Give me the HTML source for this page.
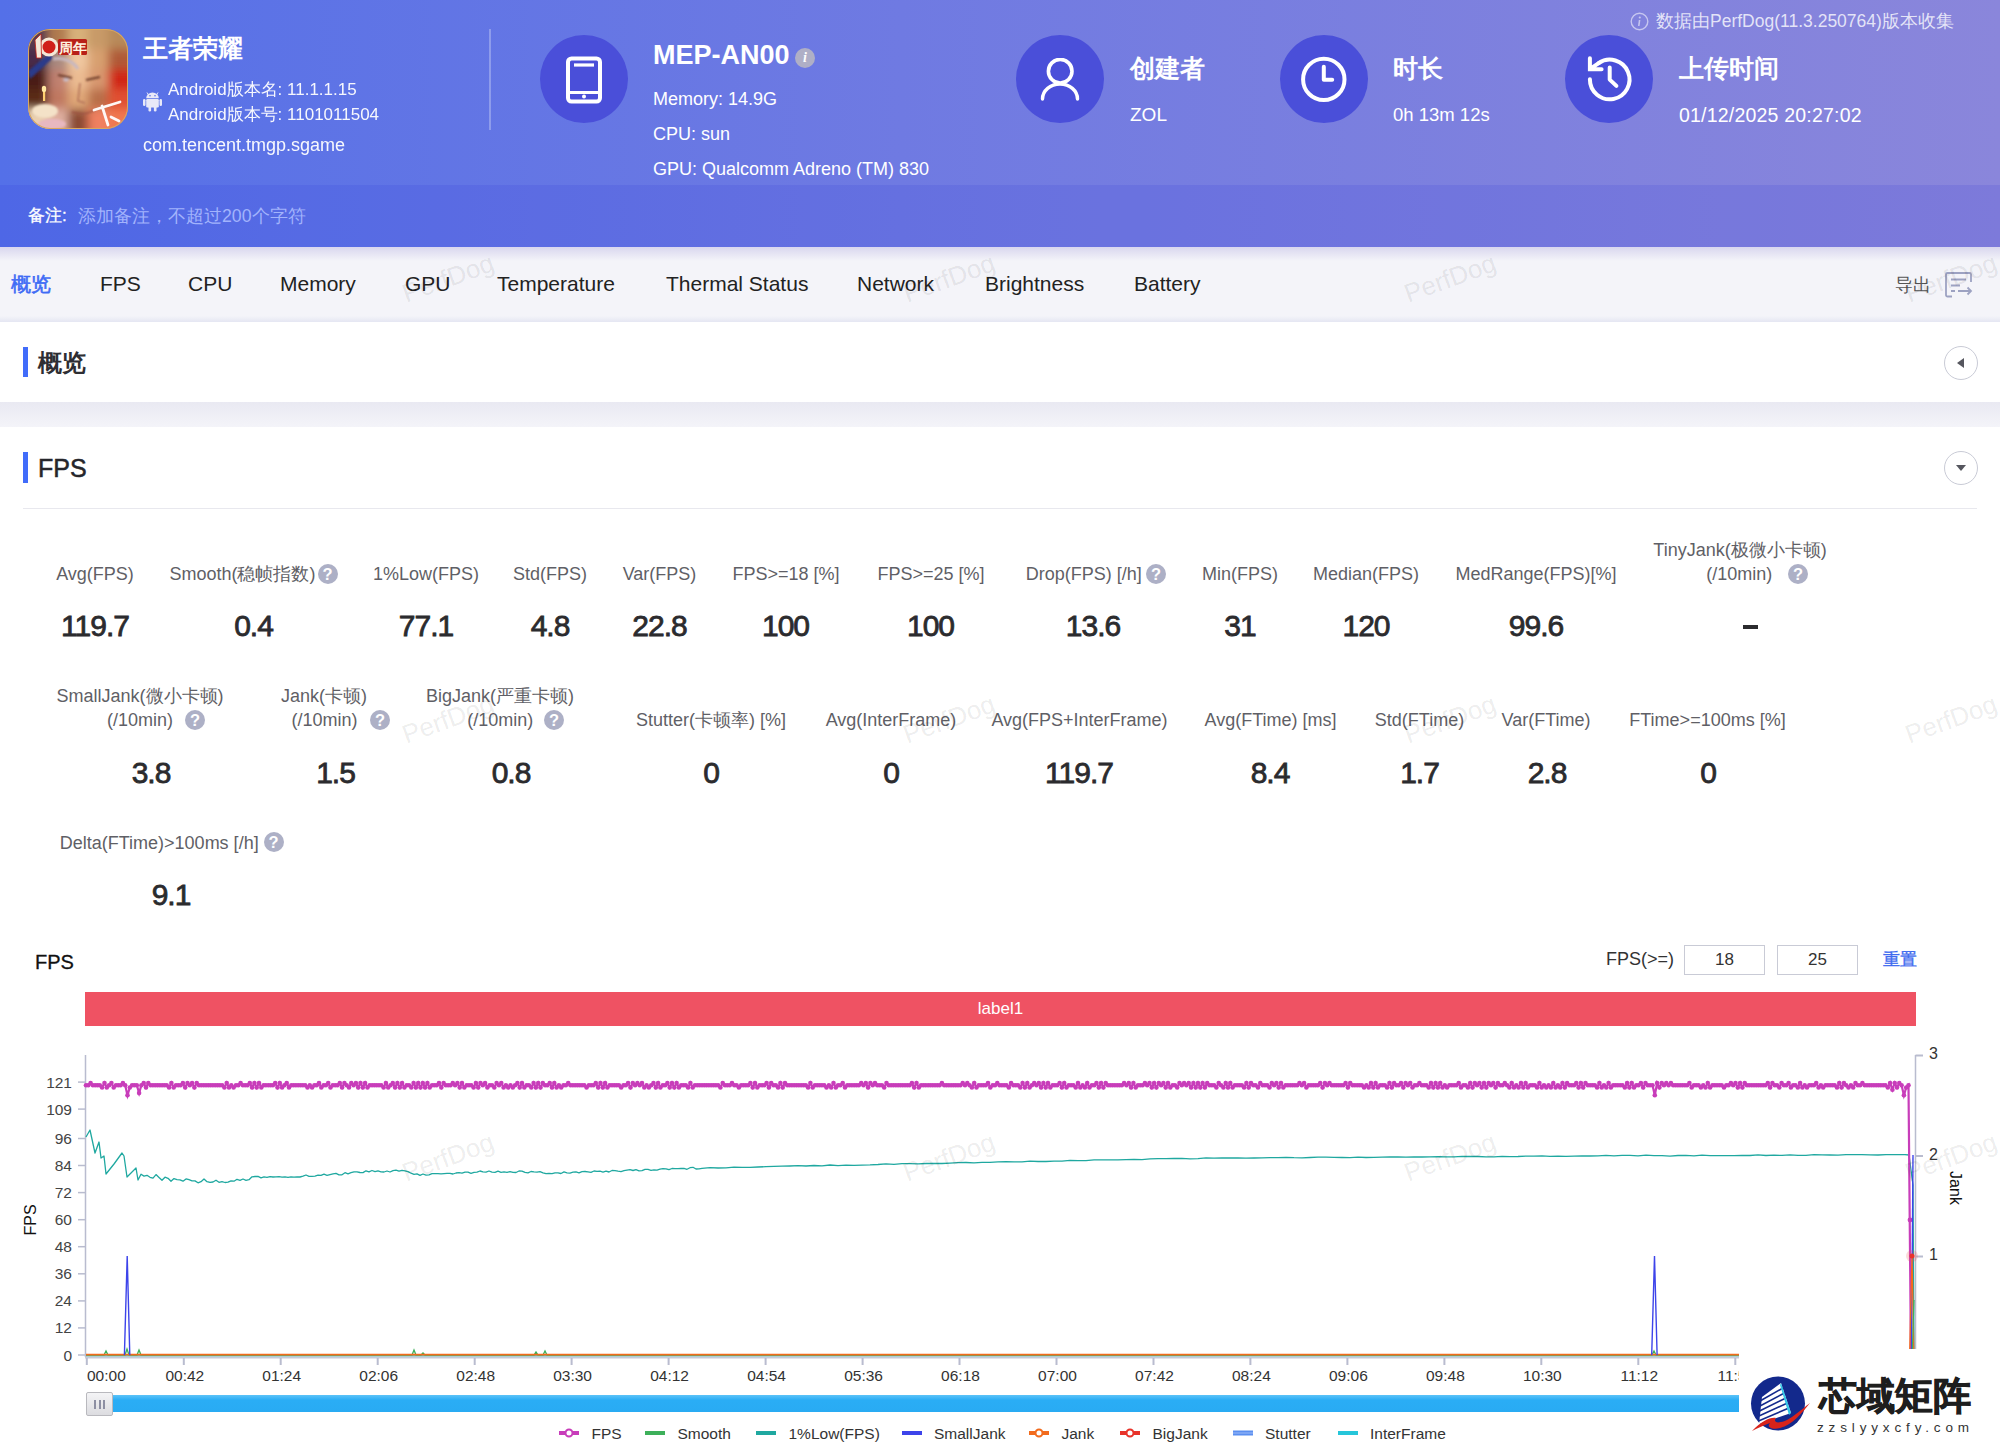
<!DOCTYPE html>
<html><head><meta charset="utf-8">
<style>
*{box-sizing:border-box;margin:0;padding:0}
html,body{width:2000px;height:1450px;overflow:hidden;background:#fff;font-family:"Liberation Sans",sans-serif;position:relative}
.a{position:absolute;white-space:nowrap}
#hdr{position:absolute;left:0;top:0;width:2000px;height:247px;background:linear-gradient(90deg,#5470E8 0%,#6F7AE2 45%,#8A86DB 100%)}
#note{position:absolute;left:0;top:185px;width:2000px;height:62px;background:rgba(40,50,215,0.13)}
.w{color:#fff}
.circ{position:absolute;width:88px;height:88px;border-radius:50%;background:#4A4FD9}
#tabs{position:absolute;left:0;top:247px;width:2000px;height:75px;background:#F4F4F9}
.tab{position:absolute;top:272px;font-size:21px;color:#222;line-height:24px}
.sec{position:absolute;left:0;width:2000px;background:#fff}
.bar{position:absolute;left:23px;width:5px;background:#416CFA}
.btn{position:absolute;width:34px;height:34px;border-radius:50%;border:1px solid #C9CBD6;background:#fff}
.lbl{position:absolute;font-size:18px;color:#5F5F66;text-align:center;width:400px;line-height:20px}
.val{position:absolute;font-size:30px;font-weight:400;color:#2B2B2E;text-align:center;width:400px;line-height:30px;letter-spacing:-1px;-webkit-text-stroke:0.8px #2B2B2E}
.q{display:inline-block;width:20px;height:20px;border-radius:50%;background:#ADB0C6;color:#fff;font-size:16.5px;font-weight:700;line-height:21px;text-align:center;vertical-align:-3px}
.wm{position:absolute;font-size:26px;color:rgba(0,0,0,0.085);transform:rotate(-20deg);transform-origin:center}
</style></head>
<body>
<div id="hdr"></div>
<div id="note"></div>

<!-- app icon -->
<svg class="a" style="left:28px;top:29px" width="100" height="100" viewBox="0 0 100 100">
 <defs><clipPath id="ic"><rect x="0" y="0" width="100" height="100" rx="22"/></clipPath><filter id="bl" x="-20%" y="-20%" width="140%" height="140%"><feGaussianBlur stdDeviation="5"/></filter><filter id="bl2"><feGaussianBlur stdDeviation="0.8"/></filter></defs>
 <g clip-path="url(#ic)">
  <g filter="url(#bl)"><rect x="-10" y="-10" width="30" height="30" fill="#5A3A50"/><rect x="20" y="-10" width="20" height="30" fill="#B07A50"/><rect x="40" y="-10" width="20" height="30" fill="#D8B07A"/><rect x="60" y="-10" width="20" height="30" fill="#C89A68"/><rect x="80" y="-10" width="30" height="30" fill="#B88A5A"/><rect x="-10" y="20" width="30" height="20" fill="#4A2A48"/><rect x="20" y="20" width="20" height="20" fill="#A88A80"/><rect x="40" y="20" width="20" height="20" fill="#F0C8A0"/><rect x="60" y="20" width="20" height="20" fill="#D8A070"/><rect x="80" y="20" width="30" height="20" fill="#B05A38"/><rect x="-10" y="40" width="30" height="20" fill="#4A1A18"/><rect x="20" y="40" width="20" height="20" fill="#C08070"/><rect x="40" y="40" width="20" height="20" fill="#EBBB92"/><rect x="60" y="40" width="20" height="20" fill="#D89870"/><rect x="80" y="40" width="30" height="20" fill="#D02818"/><rect x="-10" y="60" width="30" height="20" fill="#5A2A18"/><rect x="20" y="60" width="20" height="20" fill="#C07860"/><rect x="40" y="60" width="20" height="20" fill="#E0A878"/><rect x="60" y="60" width="20" height="20" fill="#B86E48"/><rect x="80" y="60" width="30" height="20" fill="#E05030"/><rect x="-10" y="80" width="30" height="30" fill="#EAD0B0"/><rect x="20" y="80" width="20" height="30" fill="#E0B0A0"/><rect x="40" y="80" width="20" height="30" fill="#8A4A30"/><rect x="60" y="80" width="20" height="30" fill="#F08060"/><rect x="80" y="80" width="30" height="30" fill="#F07850"/></g>
  <g filter="url(#bl2)">
   <path d="M0 42 L22 24 L25 29 L2 50 Z" fill="#2A3A8A"/>
   <path d="M25 30 C35 28 45 32 50 40" stroke="#C8B8C0" stroke-width="3" fill="none"/>
   <path d="M30 46 L44 49 M58 51 L72 48" stroke="#6A3A28" stroke-width="2"/>
   <ellipse cx="38" cy="51" rx="3" ry="1.4" fill="#C8C0D0"/>
   <path d="M52 54 L50 72 L57 74" stroke="#B07058" stroke-width="1.5" fill="none"/>
   <path d="M44 83 C52 86 60 85 66 81" stroke="#9A5040" stroke-width="1.5" fill="none"/>
  </g>
  <path d="M66 81 L92 73 M74 77 L80 96 M83 88 L91 92" stroke="#fff" stroke-width="2.8" stroke-linecap="round" opacity="0.95"/>
  <rect x="15" y="62" width="2.2" height="10" fill="#FFD070"/>
  <ellipse cx="16" cy="60" rx="2.2" ry="3.2" fill="#FFE8A0"/>
  <ellipse cx="17" cy="82" rx="13" ry="7" fill="#F4E2C8" filter="url(#bl2)"/>
  <ellipse cx="24" cy="95" rx="14" ry="5" fill="#E8B8C0" filter="url(#bl2)"/>
  <circle cx="21" cy="18" r="9.5" fill="#F4E8D8"/><circle cx="21" cy="18" r="6.5" fill="#D0201A"/>
  <path d="M7 11 L13 5 L13.5 29 L8.5 29 Z" fill="#F4E8D8" stroke="#C02018" stroke-width="0.8"/>
  <rect x="30" y="10" width="29" height="16" rx="1.5" fill="#B82018"/><text x="30.5" y="23.5" font-size="13.5" font-weight="700" fill="#FFF4E0" font-family="Liberation Sans,sans-serif">周年</text>
  <rect x="0" y="0" width="100" height="100" rx="22" fill="none" stroke="#D9A860" stroke-width="2"/>
 </g>
</svg>
<div class="a w" style="left:143px;top:33px;font-size:25px;font-weight:700;line-height:30px">王者荣耀</div>
<svg class="a" style="left:143px;top:90px" width="19" height="22" viewBox="0 0 19 22"><g fill="#E8E9F8"><path d="M4 2.5 L5.2 4.3 M15 2.5 L13.8 4.3" stroke="#E8E9F8" stroke-width="1"/><path d="M3.2 8.2 A6.3 5.6 0 0 1 15.8 8.2 Z"/><rect x="3.2" y="9" width="12.6" height="8.5" rx="1.2"/><rect x="0" y="9" width="2.5" height="7" rx="1.2"/><rect x="16.5" y="9" width="2.5" height="7" rx="1.2"/><rect x="5.5" y="16" width="2.6" height="5.5" rx="1.2"/><rect x="10.9" y="16" width="2.6" height="5.5" rx="1.2"/></g><circle cx="7" cy="5.8" r="0.8" fill="#5A6EE6"/><circle cx="12" cy="5.8" r="0.8" fill="#5A6EE6"/></svg>
<div class="a w" style="left:168px;top:80px;font-size:17px;line-height:20px;opacity:.95">Android版本名: 11.1.1.15</div>
<div class="a w" style="left:168px;top:105px;font-size:17px;line-height:20px;opacity:.95">Android版本号: 1101011504</div>
<div class="a w" style="left:143px;top:134px;font-size:18px;line-height:22px;opacity:.95">com.tencent.tmgp.sgame</div>
<div class="a" style="left:489px;top:29px;width:2px;height:101px;background:rgba(255,255,255,0.28)"></div>

<!-- device -->
<div class="circ" style="left:540px;top:35px"></div>
<svg class="a" style="left:565px;top:56px" width="38" height="48" viewBox="0 0 38 48"><rect x="3" y="2.5" width="32" height="43" rx="3.5" fill="none" stroke="#fff" stroke-width="4"/><line x1="9" y1="9" x2="29" y2="9" stroke="#fff" stroke-width="3.2"/><line x1="5" y1="36.5" x2="33" y2="36.5" stroke="#fff" stroke-width="3"/><circle cx="19" cy="40.5" r="2" fill="#fff"/></svg>
<div class="a w" style="left:653px;top:39px;font-size:27px;font-weight:700;line-height:32px">MEP-AN00</div>
<div class="a" style="left:795px;top:48px;width:20px;height:20px;border-radius:50%;background:#AFAFC6;color:#fff;font-size:14px;font-style:italic;font-weight:700;text-align:center;line-height:20px;font-family:'Liberation Serif',serif">i</div>
<div class="a w" style="left:653px;top:88px;font-size:18px;line-height:22px">Memory: 14.9G</div>
<div class="a w" style="left:653px;top:123px;font-size:18px;line-height:22px">CPU: sun</div>
<div class="a w" style="left:653px;top:158px;font-size:18px;line-height:22px">GPU: Qualcomm Adreno (TM) 830</div>

<!-- creator -->
<div class="circ" style="left:1016px;top:35px"></div>
<svg class="a" style="left:1040px;top:58px" width="40" height="44" viewBox="0 0 40 44"><circle cx="20.2" cy="13.2" r="11.8" fill="none" stroke="#fff" stroke-width="3.6"/><path d="M2.5 41 A17.5 15 0 0 1 37.5 41" fill="none" stroke="#fff" stroke-width="3.4" stroke-linecap="round"/></svg>
<div class="a w" style="left:1130px;top:53px;font-size:25px;font-weight:700;line-height:30px">创建者</div>
<div class="a w" style="left:1130px;top:104px;font-size:19px;line-height:22px">ZOL</div>

<!-- duration -->
<div class="circ" style="left:1280px;top:35px"></div>
<svg class="a" style="left:1299px;top:55px" width="50" height="50" viewBox="0 0 50 50"><circle cx="24.8" cy="24.4" r="20.7" fill="none" stroke="#fff" stroke-width="4"/><path d="M24.8 11.8 V24.8 H33.2" fill="none" stroke="#fff" stroke-width="4" stroke-linecap="round" stroke-linejoin="round"/></svg>
<div class="a w" style="left:1393px;top:53px;font-size:25px;font-weight:700;line-height:30px">时长</div>
<div class="a w" style="left:1393px;top:104px;font-size:18.5px;line-height:22px">0h 13m 12s</div>

<!-- upload -->
<div class="circ" style="left:1565px;top:35px"></div>
<svg class="a" style="left:1584px;top:55px" width="50" height="50" viewBox="0 0 50 50"><path d="M5.9 24.3 A19.8 19.8 0 1 0 14.6 8.1" fill="none" stroke="#fff" stroke-width="4" stroke-linecap="round"/><path d="M5.9 3.2 V14.2 H17.6 M6.5 13.6 L15.5 7.6" fill="none" stroke="#fff" stroke-width="4" stroke-linecap="round" stroke-linejoin="miter"/><path d="M25.7 12.4 V24.6 L32.4 30.9" fill="none" stroke="#fff" stroke-width="4" stroke-linecap="round" stroke-linejoin="round"/></svg>
<div class="a w" style="left:1679px;top:53px;font-size:25px;font-weight:700;line-height:30px">上传时间</div>
<div class="a w" style="left:1679px;top:104px;font-size:19.5px;letter-spacing:0.2px;line-height:22px">01/12/2025 20:27:02</div>

<!-- data source -->
<svg class="a" style="left:1630px;top:12px" width="19" height="19" viewBox="0 0 19 19"><circle cx="9.5" cy="9.5" r="8.3" fill="none" stroke="rgba(255,255,255,0.55)" stroke-width="1.4"/><circle cx="9.8" cy="5.5" r="1.1" fill="rgba(255,255,255,0.55)"/><path d="M9.6 8 L8.8 14" stroke="rgba(255,255,255,0.55)" stroke-width="1.6"/></svg>
<div class="a" style="left:1656px;top:10px;font-size:17.5px;line-height:22px;color:rgba(255,255,255,0.78)">数据由PerfDog(11.3.250764)版本收集</div>

<!-- note -->
<div class="a w" style="left:28px;top:205px;font-size:17px;line-height:22px;-webkit-text-stroke:0.3px #fff">备注:</div>
<div class="a" style="left:78px;top:205px;font-size:17.7px;line-height:22px;color:#A2B3FC">添加备注，不超过200个字符</div>

<!-- tabs -->
<div id="tabs"></div>
<div class="a" style="left:0;top:247px;width:2000px;height:14px;background:linear-gradient(180deg,rgba(120,110,200,0.22),rgba(120,110,200,0))"></div>
<div class="a" style="left:0;top:316px;width:2000px;height:6px;background:linear-gradient(180deg,rgba(200,205,230,0),rgba(200,205,230,0.35))"></div>
<div class="tab" style="left:11px;color:#3F6BF5;font-size:20px;-webkit-text-stroke:0.6px #3F6BF5">概览</div>
<div class="tab" style="left:100px">FPS</div>
<div class="tab" style="left:188px">CPU</div>
<div class="tab" style="left:280px">Memory</div>
<div class="tab" style="left:405px">GPU</div>
<div class="tab" style="left:497px">Temperature</div>
<div class="tab" style="left:666px">Thermal Status</div>
<div class="tab" style="left:857px">Network</div>
<div class="tab" style="left:985px">Brightness</div>
<div class="tab" style="left:1134px">Battery</div>
<div class="a" style="left:1895px;top:274px;font-size:18px;line-height:22px;color:#555">导出</div>
<svg class="a" style="left:1944px;top:271px" width="30" height="29" viewBox="0 0 30 29"><path d="M8 25.5 H3.5 A1.5 1.5 0 0 1 2 24 V3.5 A1.5 1.5 0 0 1 3.5 2 H25.5 A1.5 1.5 0 0 1 27 3.5 V11" fill="none" stroke="#9DA2C2" stroke-width="1.8"/><path d="M7 8.5 H22 M7 14.5 H16 M7 20 H11 M14 20 H27 M23.5 16.5 L27 20 L23.5 23.5" fill="none" stroke="#9DA2C2" stroke-width="1.8"/></svg>

<!-- overview section -->
<div class="sec" style="top:322px;height:80px"></div>
<div class="a" style="left:0;top:402px;width:2000px;height:25px;background:linear-gradient(180deg,#E9E9F2,#F4F4F9)"></div>
<div class="bar" style="top:347px;height:30px"></div>
<div class="a" style="left:38px;top:347px;font-size:24px;font-weight:700;color:#2E2E33;line-height:32px">概览</div>
<div class="btn" style="left:1944px;top:346px"><svg width="34" height="34" viewBox="0 0 34 34" style="position:absolute;left:-1px;top:-1px"><path d="M20 12 L13 17 L20 22 Z" fill="#55565E"/></svg></div>

<!-- fps section -->
<div class="sec" style="top:427px;height:1023px"></div>
<div class="bar" style="top:452px;height:31px"></div>
<div class="a" style="left:38px;top:453px;font-size:25px;color:#26262B;line-height:30px;-webkit-text-stroke:0.5px #26262B">FPS</div>
<div class="btn" style="left:1944px;top:451px"><svg width="34" height="34" viewBox="0 0 34 34" style="position:absolute;left:-1px;top:-1px"><path d="M12 14 L22 14 L17 20 Z" fill="#55565E"/></svg></div>
<div class="a" style="left:23px;top:508px;width:1954px;height:1px;background:#E8E8EE"></div>

<!-- metrics -->
<div class="lbl" style="left:-105.0px;top:564.0px">Avg(FPS)</div>
<div class="val" style="left:-105.0px;top:611.0px">119.7</div>
<div class="lbl" style="left:226.0px;top:564.0px">1%Low(FPS)</div>
<div class="val" style="left:226.0px;top:611.0px">77.1</div>
<div class="lbl" style="left:350.0px;top:564.0px">Std(FPS)</div>
<div class="val" style="left:350.0px;top:611.0px">4.8</div>
<div class="lbl" style="left:459.5px;top:564.0px">Var(FPS)</div>
<div class="val" style="left:459.5px;top:611.0px">22.8</div>
<div class="lbl" style="left:586.0px;top:564.0px">FPS&gt;=18 [%]</div>
<div class="val" style="left:585.5px;top:611.0px">100</div>
<div class="lbl" style="left:731.0px;top:564.0px">FPS&gt;=25 [%]</div>
<div class="val" style="left:730.5px;top:611.0px">100</div>
<div class="lbl" style="left:1040.0px;top:564.0px">Min(FPS)</div>
<div class="val" style="left:1040.0px;top:611.0px">31</div>
<div class="lbl" style="left:1166.0px;top:564.0px">Median(FPS)</div>
<div class="val" style="left:1166.0px;top:611.0px">120</div>
<div class="lbl" style="left:1336.0px;top:564.0px">MedRange(FPS)[%]</div>
<div class="val" style="left:1336.0px;top:611.0px">99.6</div>
<div class="lbl" style="left:42.4px;top:564.0px">Smooth(稳帧指数)</div>
<div class="a q" style="left:317.5px;top:563.5px;position:absolute">?</div>
<div class="val" style="left:53.5px;top:611.0px">0.4</div>
<div class="lbl" style="left:883.7px;top:564.0px">Drop(FPS) [/h]</div>
<div class="a q" style="left:1146.0px;top:563.5px;position:absolute">?</div>
<div class="val" style="left:893.0px;top:611.0px">13.6</div>
<div class="lbl" style="left:1540.0px;top:539.5px">TinyJank(极微小卡顿)</div>
<div class="lbl" style="left:1539.2px;top:564.0px">(/10min)</div>
<div class="a q" style="left:1788.0px;top:563.5px;position:absolute">?</div>
<div class="a" style="left:1743px;top:625px;width:15px;height:4px;background:#2B2B2E"></div>
<div class="lbl" style="left:-60.0px;top:685.5px">SmallJank(微小卡顿)</div>
<div class="lbl" style="left:-60.0px;top:710.0px">(/10min)</div>
<div class="a q" style="left:185.0px;top:709.5px;position:absolute">?</div>
<div class="lbl" style="left:124.0px;top:685.5px">Jank(卡顿)</div>
<div class="lbl" style="left:124.5px;top:710.0px">(/10min)</div>
<div class="a q" style="left:370.0px;top:709.5px;position:absolute">?</div>
<div class="lbl" style="left:300.0px;top:685.5px">BigJank(严重卡顿)</div>
<div class="lbl" style="left:300.2px;top:710.0px">(/10min)</div>
<div class="a q" style="left:544.0px;top:709.5px;position:absolute">?</div>
<div class="val" style="left:-49.0px;top:758.0px">3.8</div>
<div class="val" style="left:135.5px;top:758.0px">1.5</div>
<div class="val" style="left:311.0px;top:758.0px">0.8</div>
<div class="lbl" style="left:511.0px;top:710.0px">Stutter(卡顿率) [%]</div>
<div class="val" style="left:511.0px;top:758.0px">0</div>
<div class="lbl" style="left:691.0px;top:710.0px">Avg(InterFrame)</div>
<div class="val" style="left:691.0px;top:758.0px">0</div>
<div class="lbl" style="left:879.5px;top:710.0px">Avg(FPS+InterFrame)</div>
<div class="val" style="left:879.0px;top:758.0px">119.7</div>
<div class="lbl" style="left:1070.5px;top:710.0px">Avg(FTime) [ms]</div>
<div class="val" style="left:1070.0px;top:758.0px">8.4</div>
<div class="lbl" style="left:1219.5px;top:710.0px">Std(FTime)</div>
<div class="val" style="left:1219.5px;top:758.0px">1.7</div>
<div class="lbl" style="left:1346.0px;top:710.0px">Var(FTime)</div>
<div class="val" style="left:1347.0px;top:758.0px">2.8</div>
<div class="lbl" style="left:1507.5px;top:710.0px">FTime&gt;=100ms [%]</div>
<div class="val" style="left:1508.0px;top:758.0px">0</div>
<div class="lbl" style="left:-40.8px;top:832.5px">Delta(FTime)&gt;100ms [/h]</div>
<div class="a q" style="left:263.5px;top:832.0px;position:absolute">?</div>
<div class="val" style="left:-29.0px;top:880.0px">9.1</div>
<!-- chart -->
<div class="a" style="left:85px;top:992px;width:1831px;height:34px;background:#EF5263;color:#fff;font-size:17px;line-height:34px;text-align:center">label1</div>
<div class="a" style="left:35px;top:950px;font-size:20px;line-height:24px;color:#111;font-weight:400;-webkit-text-stroke:0.3px #111">FPS</div>
<div class="a" style="left:1606px;top:948px;font-size:18px;line-height:22px;color:#333">FPS(&gt;=)</div>
<div class="a" style="left:1684px;top:945px;width:81px;height:30px;border:1px solid #C9CBD6;font-size:17px;line-height:28px;text-align:center;color:#333">18</div>
<div class="a" style="left:1777px;top:945px;width:81px;height:30px;border:1px solid #C9CBD6;font-size:17px;line-height:28px;text-align:center;color:#333">25</div>
<div class="a" style="left:1883px;top:949px;font-size:17px;line-height:22px;color:#3F6BEF;-webkit-text-stroke:0.4px #3F6BEF">重置</div>
<svg class="a" style="left:0;top:1040px" width="2000" height="410" viewBox="0 1040 2000 410">
<line x1="85.5" y1="1055" x2="85.5" y2="1357" stroke="#B9BCCF" stroke-width="1.5"/>
<line x1="78" y1="1355.0" x2="85.5" y2="1355.0" stroke="#B9BCCF" stroke-width="1.5"/>
<text x="72" y="1360.5" text-anchor="end" font-size="15.5" fill="#444">0</text>
<line x1="78" y1="1327.9" x2="85.5" y2="1327.9" stroke="#B9BCCF" stroke-width="1.5"/>
<text x="72" y="1333.4" text-anchor="end" font-size="15.5" fill="#444">12</text>
<line x1="78" y1="1300.9" x2="85.5" y2="1300.9" stroke="#B9BCCF" stroke-width="1.5"/>
<text x="72" y="1306.4" text-anchor="end" font-size="15.5" fill="#444">24</text>
<line x1="78" y1="1273.8" x2="85.5" y2="1273.8" stroke="#B9BCCF" stroke-width="1.5"/>
<text x="72" y="1279.3" text-anchor="end" font-size="15.5" fill="#444">36</text>
<line x1="78" y1="1246.7" x2="85.5" y2="1246.7" stroke="#B9BCCF" stroke-width="1.5"/>
<text x="72" y="1252.2" text-anchor="end" font-size="15.5" fill="#444">48</text>
<line x1="78" y1="1219.7" x2="85.5" y2="1219.7" stroke="#B9BCCF" stroke-width="1.5"/>
<text x="72" y="1225.2" text-anchor="end" font-size="15.5" fill="#444">60</text>
<line x1="78" y1="1192.6" x2="85.5" y2="1192.6" stroke="#B9BCCF" stroke-width="1.5"/>
<text x="72" y="1198.1" text-anchor="end" font-size="15.5" fill="#444">72</text>
<line x1="78" y1="1165.5" x2="85.5" y2="1165.5" stroke="#B9BCCF" stroke-width="1.5"/>
<text x="72" y="1171.0" text-anchor="end" font-size="15.5" fill="#444">84</text>
<line x1="78" y1="1138.5" x2="85.5" y2="1138.5" stroke="#B9BCCF" stroke-width="1.5"/>
<text x="72" y="1144.0" text-anchor="end" font-size="15.5" fill="#444">96</text>
<line x1="78" y1="1109.1" x2="85.5" y2="1109.1" stroke="#B9BCCF" stroke-width="1.5"/>
<text x="72" y="1114.6" text-anchor="end" font-size="15.5" fill="#444">109</text>
<line x1="78" y1="1082.1" x2="85.5" y2="1082.1" stroke="#B9BCCF" stroke-width="1.5"/>
<text x="72" y="1087.6" text-anchor="end" font-size="15.5" fill="#444">121</text>
<text transform="translate(36,1220) rotate(-90)" text-anchor="middle" font-size="16" fill="#111">FPS</text>
<line x1="1915.5" y1="1055" x2="1915.5" y2="1357" stroke="#B9BCCF" stroke-width="1.5"/>
<line x1="1915.5" y1="1055.5" x2="1923" y2="1055.5" stroke="#B9BCCF" stroke-width="2"/>
<text x="1929" y="1059.0" font-size="16" fill="#333">3</text>
<line x1="1915.5" y1="1156.0" x2="1923" y2="1156.0" stroke="#B9BCCF" stroke-width="2"/>
<text x="1929" y="1159.5" font-size="16" fill="#333">2</text>
<line x1="1915.5" y1="1256.5" x2="1923" y2="1256.5" stroke="#B9BCCF" stroke-width="2"/>
<text x="1929" y="1260.0" font-size="16" fill="#333">1</text>
<text transform="translate(1950,1188) rotate(90)" text-anchor="middle" font-size="16" fill="#111">Jank</text>
<rect x="85" y="1356.5" width="1831" height="2" fill="#C8CAD8"/>
<rect x="85.8" y="1358" width="2" height="7" fill="#B9BCCF"/>
<text x="87" y="1381" font-size="15.5" fill="#333">00:00</text>
<rect x="182.8" y="1358" width="2" height="7" fill="#B9BCCF"/>
<text x="184.8" y="1381" text-anchor="middle" font-size="15.5" fill="#333">00:42</text>
<rect x="279.7" y="1358" width="2" height="7" fill="#B9BCCF"/>
<text x="281.7" y="1381" text-anchor="middle" font-size="15.5" fill="#333">01:24</text>
<rect x="376.7" y="1358" width="2" height="7" fill="#B9BCCF"/>
<text x="378.7" y="1381" text-anchor="middle" font-size="15.5" fill="#333">02:06</text>
<rect x="473.7" y="1358" width="2" height="7" fill="#B9BCCF"/>
<text x="475.7" y="1381" text-anchor="middle" font-size="15.5" fill="#333">02:48</text>
<rect x="570.6" y="1358" width="2" height="7" fill="#B9BCCF"/>
<text x="572.6" y="1381" text-anchor="middle" font-size="15.5" fill="#333">03:30</text>
<rect x="667.6" y="1358" width="2" height="7" fill="#B9BCCF"/>
<text x="669.6" y="1381" text-anchor="middle" font-size="15.5" fill="#333">04:12</text>
<rect x="764.6" y="1358" width="2" height="7" fill="#B9BCCF"/>
<text x="766.6" y="1381" text-anchor="middle" font-size="15.5" fill="#333">04:54</text>
<rect x="861.6" y="1358" width="2" height="7" fill="#B9BCCF"/>
<text x="863.6" y="1381" text-anchor="middle" font-size="15.5" fill="#333">05:36</text>
<rect x="958.5" y="1358" width="2" height="7" fill="#B9BCCF"/>
<text x="960.5" y="1381" text-anchor="middle" font-size="15.5" fill="#333">06:18</text>
<rect x="1055.5" y="1358" width="2" height="7" fill="#B9BCCF"/>
<text x="1057.5" y="1381" text-anchor="middle" font-size="15.5" fill="#333">07:00</text>
<rect x="1152.5" y="1358" width="2" height="7" fill="#B9BCCF"/>
<text x="1154.5" y="1381" text-anchor="middle" font-size="15.5" fill="#333">07:42</text>
<rect x="1249.4" y="1358" width="2" height="7" fill="#B9BCCF"/>
<text x="1251.4" y="1381" text-anchor="middle" font-size="15.5" fill="#333">08:24</text>
<rect x="1346.4" y="1358" width="2" height="7" fill="#B9BCCF"/>
<text x="1348.4" y="1381" text-anchor="middle" font-size="15.5" fill="#333">09:06</text>
<rect x="1443.4" y="1358" width="2" height="7" fill="#B9BCCF"/>
<text x="1445.4" y="1381" text-anchor="middle" font-size="15.5" fill="#333">09:48</text>
<rect x="1540.3" y="1358" width="2" height="7" fill="#B9BCCF"/>
<text x="1542.3" y="1381" text-anchor="middle" font-size="15.5" fill="#333">10:30</text>
<rect x="1637.3" y="1358" width="2" height="7" fill="#B9BCCF"/>
<text x="1639.3" y="1381" text-anchor="middle" font-size="15.5" fill="#333">11:12</text>
<rect x="1734.3" y="1358" width="2" height="7" fill="#B9BCCF"/>
<text x="1736.3" y="1381" text-anchor="middle" font-size="15.5" fill="#333">11:54</text>
<line x1="86" y1="1355.8" x2="1909" y2="1355.8" stroke="#1FA8A0" stroke-width="1"/>
<polyline points="86,1355 104.0,1355 106.0,1351 108.0,1355 125.0,1355 127.0,1349 129.0,1355 137.0,1355 139.0,1350 141.0,1355 412.0,1355 414.0,1350 416.0,1355 421.0,1355 423.0,1353 425.0,1355 534.0,1355 536.0,1352 538.0,1355 543.0,1355 545.0,1351 547.0,1355 1652.0,1355 1654.0,1351 1656.0,1355 1909,1355" fill="none" stroke="#3DB05A" stroke-width="1.3"/>
<line x1="86" y1="1354.6" x2="1909" y2="1354.6" stroke="#F26B1D" stroke-width="1.6"/>
<polyline points="124.4,1355 127.2,1256 129.8,1355" fill="none" stroke="#3D44EA" stroke-width="1.4"/>
<polyline points="1651.7,1355 1654.5,1256 1657.1,1355" fill="none" stroke="#3D44EA" stroke-width="1.4"/>
<polyline points="86,1137 90,1130 95,1153 99,1142 101,1158 104,1156 106,1174 114,1164 122,1153 124,1156 127,1177 136,1168 138,1180 141.0,1174.2 144.0,1176.1 147.0,1175.3 150.0,1177.3 153.0,1178.1 156.0,1174.6 159.0,1177.4 162.0,1180.3 165.0,1177.2 168.0,1178.3 171.0,1181.3 174.0,1178.6 177.0,1179.6 180.0,1179.9 183.0,1181.2 186.0,1178.9 189.0,1179.7 192.0,1180.9 195.0,1180.9 198.0,1182.8 201.0,1181.7 204.0,1178.9 207.0,1181.7 210.0,1182.4 213.0,1182.0 216.0,1180.2 219.0,1182.3 222.0,1181.6 225.0,1182.5 228.0,1182.2 231.0,1180.9 234.0,1181.2 237.0,1179.3 240.0,1180.3 243.0,1179.0 246.0,1180.3 249.0,1179.7 252.0,1176.8 255.0,1176.5 258.0,1176.4 261.0,1177.9 264.0,1176.9 267.0,1177.3 270.0,1176.6 273.0,1177.0 276.0,1176.8 279.0,1176.7 282.0,1177.1 285.0,1176.9 288.0,1177.4 291.0,1176.8 294.0,1177.2 297.0,1176.9 300.0,1177.0 303.0,1176.2 306.0,1175.0 309.0,1176.3 312.0,1176.3 315.0,1176.1 318.0,1175.2 321.0,1175.4 324.0,1174.2 327.0,1175.3 330.0,1174.6 333.0,1173.9 336.0,1173.3 339.0,1174.8 342.0,1174.8 345.0,1172.7 348.0,1173.8 351.0,1172.7 354.0,1171.9 357.0,1171.9 360.0,1172.5 363.0,1172.6 366.0,1170.8 369.0,1171.8 372.0,1170.5 375.0,1171.7 378.0,1170.8 381.0,1171.8 384.0,1172.0 387.0,1171.0 390.0,1172.0 393.0,1170.6 396.0,1170.2 399.0,1171.2 402.0,1170.3 405.0,1170.9 408.0,1171.6 411.0,1173.2 414.0,1174.3 417.0,1173.8 420.0,1175.3 423.0,1174.0 426.0,1175.2 429.0,1174.9 432.0,1173.7 435.0,1173.7 438.0,1173.7 441.0,1173.8 444.0,1173.6 447.0,1173.4 450.0,1173.4 453.0,1174.0 456.0,1173.0 459.0,1172.7 462.0,1173.2 465.0,1172.1 468.0,1172.1 471.0,1173.3 474.0,1172.3 477.0,1172.2 480.0,1171.0 483.0,1171.8 486.0,1172.2 489.0,1171.0 492.0,1172.2 495.0,1172.3 498.0,1171.1 501.0,1172.3 504.0,1171.9 507.0,1172.4 510.0,1171.7 513.0,1172.4 516.0,1172.5 519.0,1171.0 522.0,1171.1 525.0,1172.4 528.0,1172.9 531.0,1171.5 534.0,1171.9 537.0,1172.2 540.0,1171.6 543.0,1172.9 546.0,1173.6 549.0,1173.5 552.0,1173.7 555.0,1172.9 558.0,1172.9 561.0,1173.5 564.0,1171.9 567.0,1172.9 570.0,1173.1 573.0,1172.2 576.0,1171.9 579.0,1172.9 582.0,1171.7 585.0,1171.5 588.0,1171.9 591.0,1172.3 594.0,1171.0 597.0,1171.3 600.0,1171.2 603.0,1172.1 606.0,1171.2 609.0,1172.0 612.0,1170.5 615.0,1170.7 618.0,1171.2 621.0,1171.6 624.0,1170.6 627.0,1170.1 630.0,1169.7 633.0,1170.5 636.0,1169.7 639.0,1170.8 642.0,1170.7 645.0,1169.3 648.0,1169.4 651.0,1170.4 654.0,1169.9 657.0,1170.1 660.0,1169.1 663.0,1168.6 666.0,1168.8 669.0,1169.7 672.0,1168.5 675.0,1168.6 678.0,1168.6 681.0,1168.5 684.0,1168.4 687.0,1169.3 690.0,1167.7 693.0,1167.3 696.0,1169.0 699.0,1168.8 702.0,1168.3 710.0,1167.7 718.0,1168.0 726.0,1167.8 734.0,1167.1 742.0,1167.4 750.0,1167.3 758.0,1167.0 766.0,1166.7 774.0,1166.4 782.0,1166.2 790.0,1166.0 798.0,1165.7 806.0,1166.0 814.0,1165.5 822.0,1165.8 830.0,1165.0 838.0,1165.6 846.0,1165.2 854.0,1165.3 862.0,1165.1 870.0,1164.9 878.0,1164.5 886.0,1163.9 894.0,1164.3 902.0,1163.7 910.0,1163.6 918.0,1163.8 926.0,1163.5 934.0,1163.3 942.0,1163.5 950.0,1163.1 958.0,1162.7 966.0,1162.5 974.0,1162.8 982.0,1162.3 990.0,1162.4 998.0,1161.9 1006.0,1161.6 1014.0,1161.8 1022.0,1161.8 1030.0,1161.2 1038.0,1161.5 1046.0,1161.5 1054.0,1161.2 1062.0,1161.1 1070.0,1160.3 1078.0,1160.7 1086.0,1160.7 1094.0,1159.9 1102.0,1159.9 1110.0,1159.8 1118.0,1159.8 1126.0,1159.6 1134.0,1159.5 1142.0,1159.6 1150.0,1158.8 1158.0,1158.7 1166.0,1158.6 1174.0,1158.5 1182.0,1158.3 1190.0,1158.9 1198.0,1158.6 1206.0,1157.9 1214.0,1158.2 1222.0,1158.0 1230.0,1158.0 1238.0,1157.9 1246.0,1158.1 1254.0,1158.0 1262.0,1157.8 1270.0,1157.6 1278.0,1157.7 1286.0,1157.4 1294.0,1157.7 1302.0,1157.8 1310.0,1157.5 1318.0,1157.2 1326.0,1157.2 1334.0,1157.3 1342.0,1157.5 1350.0,1157.6 1358.0,1157.2 1366.0,1157.5 1374.0,1157.3 1382.0,1157.1 1390.0,1157.0 1398.0,1157.0 1406.0,1157.1 1414.0,1156.9 1422.0,1157.0 1430.0,1156.8 1438.0,1156.6 1446.0,1156.8 1454.0,1156.8 1462.0,1156.3 1470.0,1156.5 1478.0,1156.5 1486.0,1156.8 1494.0,1156.8 1502.0,1156.3 1510.0,1156.7 1518.0,1156.5 1526.0,1156.1 1534.0,1156.2 1542.0,1155.8 1550.0,1156.4 1558.0,1156.2 1566.0,1156.3 1574.0,1156.2 1582.0,1156.0 1590.0,1156.0 1598.0,1155.9 1606.0,1155.4 1614.0,1155.8 1622.0,1155.3 1630.0,1155.3 1638.0,1155.8 1646.0,1155.2 1654.0,1155.7 1662.0,1155.6 1670.0,1156.1 1678.0,1155.5 1686.0,1155.3 1694.0,1155.8 1702.0,1155.2 1710.0,1155.7 1718.0,1155.6 1726.0,1155.7 1734.0,1155.7 1742.0,1155.4 1750.0,1155.5 1758.0,1154.9 1766.0,1155.5 1774.0,1155.2 1782.0,1155.4 1790.0,1154.8 1798.0,1155.3 1806.0,1155.4 1814.0,1154.7 1822.0,1154.9 1830.0,1155.0 1838.0,1155.2 1846.0,1154.7 1854.0,1154.6 1862.0,1154.7 1870.0,1154.9 1878.0,1155.0 1886.0,1154.7 1894.0,1154.6 1902.0,1154.6 1905,1154.7 1909,1155 1913,1185 1914,1360" fill="none" stroke="#1FA8A0" stroke-width="1.3" stroke-linejoin="round"/>
<polyline points="86.0,1085.2 88.3,1085.2 90.6,1083.0 92.9,1085.2 95.2,1085.2 97.5,1085.2 99.8,1085.2 102.1,1087.5 104.5,1083.0 106.8,1087.5 109.1,1085.2 111.4,1083.0 113.7,1087.5 116.0,1085.2 118.3,1085.2 120.6,1085.2 122.9,1083.0 125.2,1085.2 127.5,1095.3 129.8,1087.5 132.1,1085.2 134.4,1085.2 136.8,1085.2 139.1,1093.1 141.4,1085.2 143.7,1083.0 146.0,1087.5 148.3,1083.0 150.6,1085.2 152.9,1085.2 155.2,1085.2 157.5,1085.2 159.8,1085.2 162.1,1085.2 164.4,1085.2 166.7,1085.2 169.1,1087.5 171.4,1083.0 173.7,1087.5 176.0,1085.2 178.3,1085.2 180.6,1085.2 182.9,1083.0 185.2,1087.5 187.5,1083.0 189.8,1085.2 192.1,1083.0 194.4,1087.5 196.7,1083.0 199.0,1085.2 201.3,1085.2 203.7,1085.2 206.0,1085.2 208.3,1085.2 210.6,1085.2 212.9,1085.2 215.2,1085.2 217.5,1085.2 219.8,1085.2 222.1,1085.2 224.4,1087.5 226.7,1083.0 229.0,1087.5 231.3,1085.2 233.6,1087.5 236.0,1085.2 238.3,1085.2 240.6,1083.0 242.9,1085.2 245.2,1085.2 247.5,1085.2 249.8,1083.0 252.1,1087.5 254.4,1083.0 256.7,1087.5 259.0,1083.0 261.3,1087.5 263.6,1085.2 265.9,1085.2 268.3,1085.2 270.6,1085.2 272.9,1085.2 275.2,1083.0 277.5,1087.5 279.8,1083.0 282.1,1087.5 284.4,1085.2 286.7,1083.0 289.0,1087.5 291.3,1085.2 293.6,1085.2 295.9,1085.2 298.2,1085.2 300.6,1085.2 302.9,1085.2 305.2,1085.2 307.5,1087.5 309.8,1085.2 312.1,1087.5 314.4,1085.2 316.7,1085.2 319.0,1083.0 321.3,1087.5 323.6,1085.2 325.9,1085.2 328.2,1083.0 330.5,1087.5 332.8,1085.2 335.2,1085.2 337.5,1085.2 339.8,1083.0 342.1,1087.5 344.4,1083.0 346.7,1085.2 349.0,1087.5 351.3,1083.0 353.6,1085.2 355.9,1083.0 358.2,1087.5 360.5,1083.0 362.8,1087.5 365.1,1083.0 367.5,1087.5 369.8,1085.2 372.1,1085.2 374.4,1085.2 376.7,1085.2 379.0,1085.2 381.3,1085.2 383.6,1087.5 385.9,1083.0 388.2,1087.5 390.5,1085.2 392.8,1083.0 395.1,1087.5 397.4,1083.0 399.8,1087.5 402.1,1083.0 404.4,1087.5 406.7,1085.2 409.0,1085.2 411.3,1087.5 413.6,1083.0 415.9,1087.5 418.2,1083.0 420.5,1087.5 422.8,1083.0 425.1,1087.5 427.4,1083.0 429.7,1087.5 432.1,1085.2 434.4,1085.2 436.7,1085.2 439.0,1083.0 441.3,1087.5 443.6,1083.0 445.9,1085.2 448.2,1085.2 450.5,1085.2 452.8,1083.0 455.1,1085.2 457.4,1083.0 459.7,1087.5 462.0,1083.0 464.3,1087.5 466.7,1085.2 469.0,1085.2 471.3,1085.2 473.6,1087.5 475.9,1083.0 478.2,1087.5 480.5,1083.0 482.8,1085.2 485.1,1083.0 487.4,1087.5 489.7,1085.2 492.0,1085.2 494.3,1087.5 496.6,1083.0 499.0,1085.2 501.3,1083.0 503.6,1087.5 505.9,1085.2 508.2,1087.5 510.5,1085.2 512.8,1087.5 515.1,1085.2 517.4,1083.0 519.7,1087.5 522.0,1083.0 524.3,1087.5 526.6,1085.2 528.9,1085.2 531.3,1087.5 533.6,1083.0 535.9,1087.5 538.2,1083.0 540.5,1087.5 542.8,1083.0 545.1,1085.2 547.4,1085.2 549.7,1083.0 552.0,1087.5 554.3,1083.0 556.6,1087.5 558.9,1085.2 561.2,1087.5 563.5,1085.2 565.9,1085.2 568.2,1083.0 570.5,1085.2 572.8,1085.2 575.1,1085.2 577.4,1085.2 579.7,1085.2 582.0,1085.2 584.3,1085.2 586.6,1087.5 588.9,1085.2 591.2,1085.2 593.5,1085.2 595.8,1083.0 598.2,1087.5 600.5,1083.0 602.8,1087.5 605.1,1083.0 607.4,1087.5 609.7,1085.2 612.0,1085.2 614.3,1085.2 616.6,1085.2 618.9,1085.2 621.2,1087.5 623.5,1085.2 625.8,1085.2 628.1,1083.0 630.5,1087.5 632.8,1083.0 635.1,1085.2 637.4,1083.0 639.7,1085.2 642.0,1083.0 644.3,1087.5 646.6,1085.2 648.9,1087.5 651.2,1085.2 653.5,1083.0 655.8,1087.5 658.1,1083.0 660.4,1087.5 662.8,1085.2 665.1,1085.2 667.4,1083.0 669.7,1087.5 672.0,1083.0 674.3,1087.5 676.6,1083.0 678.9,1087.5 681.2,1085.2 683.5,1085.2 685.8,1085.2 688.1,1087.5 690.4,1083.0 692.7,1087.5 695.0,1085.2 697.4,1085.2 699.7,1085.2 702.0,1085.2 704.3,1085.2 706.6,1085.2 708.9,1085.2 711.2,1085.2 713.5,1085.2 715.8,1085.2 718.1,1085.2 720.4,1087.5 722.7,1083.0 725.0,1085.2 727.3,1085.2 729.7,1085.2 732.0,1083.0 734.3,1085.2 736.6,1085.2 738.9,1087.5 741.2,1085.2 743.5,1085.2 745.8,1085.2 748.1,1085.2 750.4,1083.0 752.7,1087.5 755.0,1083.0 757.3,1087.5 759.6,1085.2 762.0,1085.2 764.3,1085.2 766.6,1083.0 768.9,1087.5 771.2,1083.0 773.5,1085.2 775.8,1085.2 778.1,1087.5 780.4,1083.0 782.7,1087.5 785.0,1083.0 787.3,1085.2 789.6,1085.2 791.9,1085.2 794.2,1085.2 796.6,1085.2 798.9,1085.2 801.2,1085.2 803.5,1085.2 805.8,1085.2 808.1,1087.5 810.4,1083.0 812.7,1087.5 815.0,1085.2 817.3,1085.2 819.6,1085.2 821.9,1085.2 824.2,1085.2 826.5,1087.5 828.9,1085.2 831.2,1087.5 833.5,1083.0 835.8,1087.5 838.1,1085.2 840.4,1085.2 842.7,1083.0 845.0,1087.5 847.3,1085.2 849.6,1085.2 851.9,1085.2 854.2,1085.2 856.5,1085.2 858.8,1085.2 861.2,1083.0 863.5,1085.2 865.8,1083.0 868.1,1087.5 870.4,1083.0 872.7,1085.2 875.0,1083.0 877.3,1085.2 879.6,1085.2 881.9,1085.2 884.2,1087.5 886.5,1083.0 888.8,1085.2 891.1,1085.2 893.4,1085.2 895.8,1085.2 898.1,1085.2 900.4,1085.2 902.7,1085.2 905.0,1085.2 907.3,1085.2 909.6,1085.2 911.9,1083.0 914.2,1087.5 916.5,1083.0 918.8,1087.5 921.1,1085.2 923.4,1085.2 925.7,1085.2 928.1,1085.2 930.4,1085.2 932.7,1085.2 935.0,1085.2 937.3,1085.2 939.6,1085.2 941.9,1083.0 944.2,1085.2 946.5,1085.2 948.8,1085.2 951.1,1085.2 953.4,1085.2 955.7,1085.2 958.0,1085.2 960.4,1085.2 962.7,1083.0 965.0,1085.2 967.3,1083.0 969.6,1085.2 971.9,1087.5 974.2,1083.0 976.5,1087.5 978.8,1085.2 981.1,1085.2 983.4,1085.2 985.7,1085.2 988.0,1083.0 990.3,1087.5 992.7,1085.2 995.0,1085.2 997.3,1083.0 999.6,1085.2 1001.9,1085.2 1004.2,1085.2 1006.5,1085.2 1008.8,1087.5 1011.1,1083.0 1013.4,1085.2 1015.7,1085.2 1018.0,1085.2 1020.3,1087.5 1022.6,1083.0 1024.9,1087.5 1027.3,1083.0 1029.6,1087.5 1031.9,1085.2 1034.2,1083.0 1036.5,1085.2 1038.8,1083.0 1041.1,1087.5 1043.4,1083.0 1045.7,1087.5 1048.0,1083.0 1050.3,1087.5 1052.6,1085.2 1054.9,1085.2 1057.2,1085.2 1059.6,1083.0 1061.9,1087.5 1064.2,1083.0 1066.5,1087.5 1068.8,1085.2 1071.1,1085.2 1073.4,1085.2 1075.7,1087.5 1078.0,1083.0 1080.3,1087.5 1082.6,1085.2 1084.9,1087.5 1087.2,1083.0 1089.5,1087.5 1091.9,1085.2 1094.2,1085.2 1096.5,1083.0 1098.8,1087.5 1101.1,1083.0 1103.4,1087.5 1105.7,1083.0 1108.0,1085.2 1110.3,1085.2 1112.6,1085.2 1114.9,1085.2 1117.2,1085.2 1119.5,1085.2 1121.8,1085.2 1124.1,1083.0 1126.5,1085.2 1128.8,1083.0 1131.1,1087.5 1133.4,1083.0 1135.7,1087.5 1138.0,1085.2 1140.3,1085.2 1142.6,1085.2 1144.9,1083.0 1147.2,1085.2 1149.5,1083.0 1151.8,1087.5 1154.1,1083.0 1156.4,1087.5 1158.8,1083.0 1161.1,1085.2 1163.4,1083.0 1165.7,1087.5 1168.0,1083.0 1170.3,1087.5 1172.6,1085.2 1174.9,1085.2 1177.2,1087.5 1179.5,1083.0 1181.8,1085.2 1184.1,1083.0 1186.4,1085.2 1188.7,1083.0 1191.1,1087.5 1193.4,1083.0 1195.7,1087.5 1198.0,1083.0 1200.3,1087.5 1202.6,1083.0 1204.9,1087.5 1207.2,1083.0 1209.5,1085.2 1211.8,1085.2 1214.1,1085.2 1216.4,1087.5 1218.7,1083.0 1221.0,1085.2 1223.4,1087.5 1225.7,1083.0 1228.0,1087.5 1230.3,1083.0 1232.6,1087.5 1234.9,1085.2 1237.2,1085.2 1239.5,1085.2 1241.8,1085.2 1244.1,1087.5 1246.4,1083.0 1248.7,1087.5 1251.0,1083.0 1253.3,1085.2 1255.6,1085.2 1258.0,1087.5 1260.3,1083.0 1262.6,1085.2 1264.9,1085.2 1267.2,1085.2 1269.5,1087.5 1271.8,1083.0 1274.1,1085.2 1276.4,1083.0 1278.7,1087.5 1281.0,1083.0 1283.3,1087.5 1285.6,1085.2 1287.9,1085.2 1290.3,1085.2 1292.6,1085.2 1294.9,1085.2 1297.2,1085.2 1299.5,1083.0 1301.8,1085.2 1304.1,1083.0 1306.4,1087.5 1308.7,1085.2 1311.0,1085.2 1313.3,1085.2 1315.6,1085.2 1317.9,1085.2 1320.2,1083.0 1322.6,1087.5 1324.9,1083.0 1327.2,1085.2 1329.5,1083.0 1331.8,1085.2 1334.1,1085.2 1336.4,1085.2 1338.7,1085.2 1341.0,1085.2 1343.3,1085.2 1345.6,1083.0 1347.9,1087.5 1350.2,1083.0 1352.5,1085.2 1354.8,1085.2 1357.2,1085.2 1359.5,1085.2 1361.8,1085.2 1364.1,1087.5 1366.4,1085.2 1368.7,1087.5 1371.0,1083.0 1373.3,1087.5 1375.6,1083.0 1377.9,1087.5 1380.2,1085.2 1382.5,1085.2 1384.8,1085.2 1387.1,1087.5 1389.5,1083.0 1391.8,1087.5 1394.1,1083.0 1396.4,1085.2 1398.7,1085.2 1401.0,1083.0 1403.3,1087.5 1405.6,1083.0 1407.9,1085.2 1410.2,1083.0 1412.5,1087.5 1414.8,1085.2 1417.1,1085.2 1419.4,1083.0 1421.8,1085.2 1424.1,1085.2 1426.4,1085.2 1428.7,1087.5 1431.0,1083.0 1433.3,1087.5 1435.6,1083.0 1437.9,1087.5 1440.2,1083.0 1442.5,1087.5 1444.8,1085.2 1447.1,1087.5 1449.4,1085.2 1451.7,1085.2 1454.1,1085.2 1456.4,1085.2 1458.7,1083.0 1461.0,1087.5 1463.3,1085.2 1465.6,1085.2 1467.9,1087.5 1470.2,1083.0 1472.5,1087.5 1474.8,1083.0 1477.1,1085.2 1479.4,1083.0 1481.7,1087.5 1484.0,1083.0 1486.3,1087.5 1488.7,1083.0 1491.0,1085.2 1493.3,1083.0 1495.6,1087.5 1497.9,1083.0 1500.2,1085.2 1502.5,1085.2 1504.8,1083.0 1507.1,1085.2 1509.4,1087.5 1511.7,1083.0 1514.0,1087.5 1516.3,1085.2 1518.6,1087.5 1521.0,1083.0 1523.3,1087.5 1525.6,1083.0 1527.9,1087.5 1530.2,1085.2 1532.5,1085.2 1534.8,1085.2 1537.1,1087.5 1539.4,1083.0 1541.7,1087.5 1544.0,1085.2 1546.3,1087.5 1548.6,1085.2 1550.9,1087.5 1553.3,1083.0 1555.6,1087.5 1557.9,1085.2 1560.2,1087.5 1562.5,1083.0 1564.8,1087.5 1567.1,1083.0 1569.4,1085.2 1571.7,1085.2 1574.0,1085.2 1576.3,1083.0 1578.6,1087.5 1580.9,1083.0 1583.2,1087.5 1585.5,1083.0 1587.9,1085.2 1590.2,1085.2 1592.5,1085.2 1594.8,1085.2 1597.1,1087.5 1599.4,1083.0 1601.7,1087.5 1604.0,1085.2 1606.3,1087.5 1608.6,1083.0 1610.9,1087.5 1613.2,1085.2 1615.5,1085.2 1617.8,1085.2 1620.2,1085.2 1622.5,1085.2 1624.8,1087.5 1627.1,1083.0 1629.4,1087.5 1631.7,1083.0 1634.0,1087.5 1636.3,1085.2 1638.6,1085.2 1640.9,1083.0 1643.2,1087.5 1645.5,1083.0 1647.8,1085.2 1650.1,1085.2 1652.5,1085.2 1654.8,1095.3 1657.1,1083.0 1659.4,1087.5 1661.7,1083.0 1664.0,1085.2 1666.3,1083.0 1668.6,1085.2 1670.9,1083.0 1673.2,1085.2 1675.5,1085.2 1677.8,1085.2 1680.1,1085.2 1682.4,1085.2 1684.8,1085.2 1687.1,1085.2 1689.4,1083.0 1691.7,1087.5 1694.0,1085.2 1696.3,1085.2 1698.6,1085.2 1700.9,1087.5 1703.2,1085.2 1705.5,1087.5 1707.8,1083.0 1710.1,1087.5 1712.4,1085.2 1714.7,1085.2 1717.0,1085.2 1719.4,1085.2 1721.7,1085.2 1724.0,1087.5 1726.3,1085.2 1728.6,1085.2 1730.9,1083.0 1733.2,1085.2 1735.5,1083.0 1737.8,1087.5 1740.1,1083.0 1742.4,1087.5 1744.7,1083.0 1747.0,1085.2 1749.3,1085.2 1751.7,1085.2 1754.0,1085.2 1756.3,1085.2 1758.6,1085.2 1760.9,1085.2 1763.2,1085.2 1765.5,1085.2 1767.8,1083.0 1770.1,1087.5 1772.4,1083.0 1774.7,1085.2 1777.0,1085.2 1779.3,1087.5 1781.6,1083.0 1784.0,1085.2 1786.3,1085.2 1788.6,1083.0 1790.9,1087.5 1793.2,1085.2 1795.5,1085.2 1797.8,1087.5 1800.1,1083.0 1802.4,1087.5 1804.7,1085.2 1807.0,1087.5 1809.3,1085.2 1811.6,1085.2 1813.9,1085.2 1816.2,1083.0 1818.6,1087.5 1820.9,1085.2 1823.2,1087.5 1825.5,1085.2 1827.8,1085.2 1830.1,1085.2 1832.4,1085.2 1834.7,1085.2 1837.0,1087.5 1839.3,1083.0 1841.6,1087.5 1843.9,1083.0 1846.2,1085.2 1848.5,1087.5 1850.9,1085.2 1853.2,1087.5 1855.5,1083.0 1857.8,1085.2 1860.1,1085.2 1862.4,1083.0 1864.7,1085.2 1867.0,1085.2 1869.3,1085.2 1871.6,1085.2 1873.9,1085.2 1876.2,1085.2 1878.5,1085.2 1880.8,1085.2 1883.2,1085.2 1885.5,1085.2 1887.8,1087.5 1890.1,1083.0 1892.4,1089.7 1894.7,1083.0 1897.0,1087.5 1899.3,1083.0 1901.6,1085.2 1903.9,1095.3 1906.2,1087.5 1908.5,1085.2 1911,1360" fill="none" stroke="#C83DBA" stroke-width="2.2"/>
<g fill="#C83DBA"><circle cx="86.0" cy="1085.2" r="2.3"/><circle cx="88.3" cy="1085.2" r="2.3"/><circle cx="90.6" cy="1083.0" r="2.3"/><circle cx="92.9" cy="1085.2" r="2.3"/><circle cx="95.2" cy="1085.2" r="2.3"/><circle cx="97.5" cy="1085.2" r="2.3"/><circle cx="99.8" cy="1085.2" r="2.3"/><circle cx="102.1" cy="1087.5" r="2.3"/><circle cx="104.5" cy="1083.0" r="2.3"/><circle cx="106.8" cy="1087.5" r="2.3"/><circle cx="109.1" cy="1085.2" r="2.3"/><circle cx="111.4" cy="1083.0" r="2.3"/><circle cx="113.7" cy="1087.5" r="2.3"/><circle cx="116.0" cy="1085.2" r="2.3"/><circle cx="118.3" cy="1085.2" r="2.3"/><circle cx="120.6" cy="1085.2" r="2.3"/><circle cx="122.9" cy="1083.0" r="2.3"/><circle cx="125.2" cy="1085.2" r="2.3"/><circle cx="127.5" cy="1095.3" r="2.3"/><circle cx="129.8" cy="1087.5" r="2.3"/><circle cx="132.1" cy="1085.2" r="2.3"/><circle cx="134.4" cy="1085.2" r="2.3"/><circle cx="136.8" cy="1085.2" r="2.3"/><circle cx="139.1" cy="1093.1" r="2.3"/><circle cx="141.4" cy="1085.2" r="2.3"/><circle cx="143.7" cy="1083.0" r="2.3"/><circle cx="146.0" cy="1087.5" r="2.3"/><circle cx="148.3" cy="1083.0" r="2.3"/><circle cx="150.6" cy="1085.2" r="2.3"/><circle cx="152.9" cy="1085.2" r="2.3"/><circle cx="155.2" cy="1085.2" r="2.3"/><circle cx="157.5" cy="1085.2" r="2.3"/><circle cx="159.8" cy="1085.2" r="2.3"/><circle cx="162.1" cy="1085.2" r="2.3"/><circle cx="164.4" cy="1085.2" r="2.3"/><circle cx="166.7" cy="1085.2" r="2.3"/><circle cx="169.1" cy="1087.5" r="2.3"/><circle cx="171.4" cy="1083.0" r="2.3"/><circle cx="173.7" cy="1087.5" r="2.3"/><circle cx="176.0" cy="1085.2" r="2.3"/><circle cx="178.3" cy="1085.2" r="2.3"/><circle cx="180.6" cy="1085.2" r="2.3"/><circle cx="182.9" cy="1083.0" r="2.3"/><circle cx="185.2" cy="1087.5" r="2.3"/><circle cx="187.5" cy="1083.0" r="2.3"/><circle cx="189.8" cy="1085.2" r="2.3"/><circle cx="192.1" cy="1083.0" r="2.3"/><circle cx="194.4" cy="1087.5" r="2.3"/><circle cx="196.7" cy="1083.0" r="2.3"/><circle cx="199.0" cy="1085.2" r="2.3"/><circle cx="201.3" cy="1085.2" r="2.3"/><circle cx="203.7" cy="1085.2" r="2.3"/><circle cx="206.0" cy="1085.2" r="2.3"/><circle cx="208.3" cy="1085.2" r="2.3"/><circle cx="210.6" cy="1085.2" r="2.3"/><circle cx="212.9" cy="1085.2" r="2.3"/><circle cx="215.2" cy="1085.2" r="2.3"/><circle cx="217.5" cy="1085.2" r="2.3"/><circle cx="219.8" cy="1085.2" r="2.3"/><circle cx="222.1" cy="1085.2" r="2.3"/><circle cx="224.4" cy="1087.5" r="2.3"/><circle cx="226.7" cy="1083.0" r="2.3"/><circle cx="229.0" cy="1087.5" r="2.3"/><circle cx="231.3" cy="1085.2" r="2.3"/><circle cx="233.6" cy="1087.5" r="2.3"/><circle cx="236.0" cy="1085.2" r="2.3"/><circle cx="238.3" cy="1085.2" r="2.3"/><circle cx="240.6" cy="1083.0" r="2.3"/><circle cx="242.9" cy="1085.2" r="2.3"/><circle cx="245.2" cy="1085.2" r="2.3"/><circle cx="247.5" cy="1085.2" r="2.3"/><circle cx="249.8" cy="1083.0" r="2.3"/><circle cx="252.1" cy="1087.5" r="2.3"/><circle cx="254.4" cy="1083.0" r="2.3"/><circle cx="256.7" cy="1087.5" r="2.3"/><circle cx="259.0" cy="1083.0" r="2.3"/><circle cx="261.3" cy="1087.5" r="2.3"/><circle cx="263.6" cy="1085.2" r="2.3"/><circle cx="265.9" cy="1085.2" r="2.3"/><circle cx="268.3" cy="1085.2" r="2.3"/><circle cx="270.6" cy="1085.2" r="2.3"/><circle cx="272.9" cy="1085.2" r="2.3"/><circle cx="275.2" cy="1083.0" r="2.3"/><circle cx="277.5" cy="1087.5" r="2.3"/><circle cx="279.8" cy="1083.0" r="2.3"/><circle cx="282.1" cy="1087.5" r="2.3"/><circle cx="284.4" cy="1085.2" r="2.3"/><circle cx="286.7" cy="1083.0" r="2.3"/><circle cx="289.0" cy="1087.5" r="2.3"/><circle cx="291.3" cy="1085.2" r="2.3"/><circle cx="293.6" cy="1085.2" r="2.3"/><circle cx="295.9" cy="1085.2" r="2.3"/><circle cx="298.2" cy="1085.2" r="2.3"/><circle cx="300.6" cy="1085.2" r="2.3"/><circle cx="302.9" cy="1085.2" r="2.3"/><circle cx="305.2" cy="1085.2" r="2.3"/><circle cx="307.5" cy="1087.5" r="2.3"/><circle cx="309.8" cy="1085.2" r="2.3"/><circle cx="312.1" cy="1087.5" r="2.3"/><circle cx="314.4" cy="1085.2" r="2.3"/><circle cx="316.7" cy="1085.2" r="2.3"/><circle cx="319.0" cy="1083.0" r="2.3"/><circle cx="321.3" cy="1087.5" r="2.3"/><circle cx="323.6" cy="1085.2" r="2.3"/><circle cx="325.9" cy="1085.2" r="2.3"/><circle cx="328.2" cy="1083.0" r="2.3"/><circle cx="330.5" cy="1087.5" r="2.3"/><circle cx="332.8" cy="1085.2" r="2.3"/><circle cx="335.2" cy="1085.2" r="2.3"/><circle cx="337.5" cy="1085.2" r="2.3"/><circle cx="339.8" cy="1083.0" r="2.3"/><circle cx="342.1" cy="1087.5" r="2.3"/><circle cx="344.4" cy="1083.0" r="2.3"/><circle cx="346.7" cy="1085.2" r="2.3"/><circle cx="349.0" cy="1087.5" r="2.3"/><circle cx="351.3" cy="1083.0" r="2.3"/><circle cx="353.6" cy="1085.2" r="2.3"/><circle cx="355.9" cy="1083.0" r="2.3"/><circle cx="358.2" cy="1087.5" r="2.3"/><circle cx="360.5" cy="1083.0" r="2.3"/><circle cx="362.8" cy="1087.5" r="2.3"/><circle cx="365.1" cy="1083.0" r="2.3"/><circle cx="367.5" cy="1087.5" r="2.3"/><circle cx="369.8" cy="1085.2" r="2.3"/><circle cx="372.1" cy="1085.2" r="2.3"/><circle cx="374.4" cy="1085.2" r="2.3"/><circle cx="376.7" cy="1085.2" r="2.3"/><circle cx="379.0" cy="1085.2" r="2.3"/><circle cx="381.3" cy="1085.2" r="2.3"/><circle cx="383.6" cy="1087.5" r="2.3"/><circle cx="385.9" cy="1083.0" r="2.3"/><circle cx="388.2" cy="1087.5" r="2.3"/><circle cx="390.5" cy="1085.2" r="2.3"/><circle cx="392.8" cy="1083.0" r="2.3"/><circle cx="395.1" cy="1087.5" r="2.3"/><circle cx="397.4" cy="1083.0" r="2.3"/><circle cx="399.8" cy="1087.5" r="2.3"/><circle cx="402.1" cy="1083.0" r="2.3"/><circle cx="404.4" cy="1087.5" r="2.3"/><circle cx="406.7" cy="1085.2" r="2.3"/><circle cx="409.0" cy="1085.2" r="2.3"/><circle cx="411.3" cy="1087.5" r="2.3"/><circle cx="413.6" cy="1083.0" r="2.3"/><circle cx="415.9" cy="1087.5" r="2.3"/><circle cx="418.2" cy="1083.0" r="2.3"/><circle cx="420.5" cy="1087.5" r="2.3"/><circle cx="422.8" cy="1083.0" r="2.3"/><circle cx="425.1" cy="1087.5" r="2.3"/><circle cx="427.4" cy="1083.0" r="2.3"/><circle cx="429.7" cy="1087.5" r="2.3"/><circle cx="432.1" cy="1085.2" r="2.3"/><circle cx="434.4" cy="1085.2" r="2.3"/><circle cx="436.7" cy="1085.2" r="2.3"/><circle cx="439.0" cy="1083.0" r="2.3"/><circle cx="441.3" cy="1087.5" r="2.3"/><circle cx="443.6" cy="1083.0" r="2.3"/><circle cx="445.9" cy="1085.2" r="2.3"/><circle cx="448.2" cy="1085.2" r="2.3"/><circle cx="450.5" cy="1085.2" r="2.3"/><circle cx="452.8" cy="1083.0" r="2.3"/><circle cx="455.1" cy="1085.2" r="2.3"/><circle cx="457.4" cy="1083.0" r="2.3"/><circle cx="459.7" cy="1087.5" r="2.3"/><circle cx="462.0" cy="1083.0" r="2.3"/><circle cx="464.3" cy="1087.5" r="2.3"/><circle cx="466.7" cy="1085.2" r="2.3"/><circle cx="469.0" cy="1085.2" r="2.3"/><circle cx="471.3" cy="1085.2" r="2.3"/><circle cx="473.6" cy="1087.5" r="2.3"/><circle cx="475.9" cy="1083.0" r="2.3"/><circle cx="478.2" cy="1087.5" r="2.3"/><circle cx="480.5" cy="1083.0" r="2.3"/><circle cx="482.8" cy="1085.2" r="2.3"/><circle cx="485.1" cy="1083.0" r="2.3"/><circle cx="487.4" cy="1087.5" r="2.3"/><circle cx="489.7" cy="1085.2" r="2.3"/><circle cx="492.0" cy="1085.2" r="2.3"/><circle cx="494.3" cy="1087.5" r="2.3"/><circle cx="496.6" cy="1083.0" r="2.3"/><circle cx="499.0" cy="1085.2" r="2.3"/><circle cx="501.3" cy="1083.0" r="2.3"/><circle cx="503.6" cy="1087.5" r="2.3"/><circle cx="505.9" cy="1085.2" r="2.3"/><circle cx="508.2" cy="1087.5" r="2.3"/><circle cx="510.5" cy="1085.2" r="2.3"/><circle cx="512.8" cy="1087.5" r="2.3"/><circle cx="515.1" cy="1085.2" r="2.3"/><circle cx="517.4" cy="1083.0" r="2.3"/><circle cx="519.7" cy="1087.5" r="2.3"/><circle cx="522.0" cy="1083.0" r="2.3"/><circle cx="524.3" cy="1087.5" r="2.3"/><circle cx="526.6" cy="1085.2" r="2.3"/><circle cx="528.9" cy="1085.2" r="2.3"/><circle cx="531.3" cy="1087.5" r="2.3"/><circle cx="533.6" cy="1083.0" r="2.3"/><circle cx="535.9" cy="1087.5" r="2.3"/><circle cx="538.2" cy="1083.0" r="2.3"/><circle cx="540.5" cy="1087.5" r="2.3"/><circle cx="542.8" cy="1083.0" r="2.3"/><circle cx="545.1" cy="1085.2" r="2.3"/><circle cx="547.4" cy="1085.2" r="2.3"/><circle cx="549.7" cy="1083.0" r="2.3"/><circle cx="552.0" cy="1087.5" r="2.3"/><circle cx="554.3" cy="1083.0" r="2.3"/><circle cx="556.6" cy="1087.5" r="2.3"/><circle cx="558.9" cy="1085.2" r="2.3"/><circle cx="561.2" cy="1087.5" r="2.3"/><circle cx="563.5" cy="1085.2" r="2.3"/><circle cx="565.9" cy="1085.2" r="2.3"/><circle cx="568.2" cy="1083.0" r="2.3"/><circle cx="570.5" cy="1085.2" r="2.3"/><circle cx="572.8" cy="1085.2" r="2.3"/><circle cx="575.1" cy="1085.2" r="2.3"/><circle cx="577.4" cy="1085.2" r="2.3"/><circle cx="579.7" cy="1085.2" r="2.3"/><circle cx="582.0" cy="1085.2" r="2.3"/><circle cx="584.3" cy="1085.2" r="2.3"/><circle cx="586.6" cy="1087.5" r="2.3"/><circle cx="588.9" cy="1085.2" r="2.3"/><circle cx="591.2" cy="1085.2" r="2.3"/><circle cx="593.5" cy="1085.2" r="2.3"/><circle cx="595.8" cy="1083.0" r="2.3"/><circle cx="598.2" cy="1087.5" r="2.3"/><circle cx="600.5" cy="1083.0" r="2.3"/><circle cx="602.8" cy="1087.5" r="2.3"/><circle cx="605.1" cy="1083.0" r="2.3"/><circle cx="607.4" cy="1087.5" r="2.3"/><circle cx="609.7" cy="1085.2" r="2.3"/><circle cx="612.0" cy="1085.2" r="2.3"/><circle cx="614.3" cy="1085.2" r="2.3"/><circle cx="616.6" cy="1085.2" r="2.3"/><circle cx="618.9" cy="1085.2" r="2.3"/><circle cx="621.2" cy="1087.5" r="2.3"/><circle cx="623.5" cy="1085.2" r="2.3"/><circle cx="625.8" cy="1085.2" r="2.3"/><circle cx="628.1" cy="1083.0" r="2.3"/><circle cx="630.5" cy="1087.5" r="2.3"/><circle cx="632.8" cy="1083.0" r="2.3"/><circle cx="635.1" cy="1085.2" r="2.3"/><circle cx="637.4" cy="1083.0" r="2.3"/><circle cx="639.7" cy="1085.2" r="2.3"/><circle cx="642.0" cy="1083.0" r="2.3"/><circle cx="644.3" cy="1087.5" r="2.3"/><circle cx="646.6" cy="1085.2" r="2.3"/><circle cx="648.9" cy="1087.5" r="2.3"/><circle cx="651.2" cy="1085.2" r="2.3"/><circle cx="653.5" cy="1083.0" r="2.3"/><circle cx="655.8" cy="1087.5" r="2.3"/><circle cx="658.1" cy="1083.0" r="2.3"/><circle cx="660.4" cy="1087.5" r="2.3"/><circle cx="662.8" cy="1085.2" r="2.3"/><circle cx="665.1" cy="1085.2" r="2.3"/><circle cx="667.4" cy="1083.0" r="2.3"/><circle cx="669.7" cy="1087.5" r="2.3"/><circle cx="672.0" cy="1083.0" r="2.3"/><circle cx="674.3" cy="1087.5" r="2.3"/><circle cx="676.6" cy="1083.0" r="2.3"/><circle cx="678.9" cy="1087.5" r="2.3"/><circle cx="681.2" cy="1085.2" r="2.3"/><circle cx="683.5" cy="1085.2" r="2.3"/><circle cx="685.8" cy="1085.2" r="2.3"/><circle cx="688.1" cy="1087.5" r="2.3"/><circle cx="690.4" cy="1083.0" r="2.3"/><circle cx="692.7" cy="1087.5" r="2.3"/><circle cx="695.0" cy="1085.2" r="2.3"/><circle cx="697.4" cy="1085.2" r="2.3"/><circle cx="699.7" cy="1085.2" r="2.3"/><circle cx="702.0" cy="1085.2" r="2.3"/><circle cx="704.3" cy="1085.2" r="2.3"/><circle cx="706.6" cy="1085.2" r="2.3"/><circle cx="708.9" cy="1085.2" r="2.3"/><circle cx="711.2" cy="1085.2" r="2.3"/><circle cx="713.5" cy="1085.2" r="2.3"/><circle cx="715.8" cy="1085.2" r="2.3"/><circle cx="718.1" cy="1085.2" r="2.3"/><circle cx="720.4" cy="1087.5" r="2.3"/><circle cx="722.7" cy="1083.0" r="2.3"/><circle cx="725.0" cy="1085.2" r="2.3"/><circle cx="727.3" cy="1085.2" r="2.3"/><circle cx="729.7" cy="1085.2" r="2.3"/><circle cx="732.0" cy="1083.0" r="2.3"/><circle cx="734.3" cy="1085.2" r="2.3"/><circle cx="736.6" cy="1085.2" r="2.3"/><circle cx="738.9" cy="1087.5" r="2.3"/><circle cx="741.2" cy="1085.2" r="2.3"/><circle cx="743.5" cy="1085.2" r="2.3"/><circle cx="745.8" cy="1085.2" r="2.3"/><circle cx="748.1" cy="1085.2" r="2.3"/><circle cx="750.4" cy="1083.0" r="2.3"/><circle cx="752.7" cy="1087.5" r="2.3"/><circle cx="755.0" cy="1083.0" r="2.3"/><circle cx="757.3" cy="1087.5" r="2.3"/><circle cx="759.6" cy="1085.2" r="2.3"/><circle cx="762.0" cy="1085.2" r="2.3"/><circle cx="764.3" cy="1085.2" r="2.3"/><circle cx="766.6" cy="1083.0" r="2.3"/><circle cx="768.9" cy="1087.5" r="2.3"/><circle cx="771.2" cy="1083.0" r="2.3"/><circle cx="773.5" cy="1085.2" r="2.3"/><circle cx="775.8" cy="1085.2" r="2.3"/><circle cx="778.1" cy="1087.5" r="2.3"/><circle cx="780.4" cy="1083.0" r="2.3"/><circle cx="782.7" cy="1087.5" r="2.3"/><circle cx="785.0" cy="1083.0" r="2.3"/><circle cx="787.3" cy="1085.2" r="2.3"/><circle cx="789.6" cy="1085.2" r="2.3"/><circle cx="791.9" cy="1085.2" r="2.3"/><circle cx="794.2" cy="1085.2" r="2.3"/><circle cx="796.6" cy="1085.2" r="2.3"/><circle cx="798.9" cy="1085.2" r="2.3"/><circle cx="801.2" cy="1085.2" r="2.3"/><circle cx="803.5" cy="1085.2" r="2.3"/><circle cx="805.8" cy="1085.2" r="2.3"/><circle cx="808.1" cy="1087.5" r="2.3"/><circle cx="810.4" cy="1083.0" r="2.3"/><circle cx="812.7" cy="1087.5" r="2.3"/><circle cx="815.0" cy="1085.2" r="2.3"/><circle cx="817.3" cy="1085.2" r="2.3"/><circle cx="819.6" cy="1085.2" r="2.3"/><circle cx="821.9" cy="1085.2" r="2.3"/><circle cx="824.2" cy="1085.2" r="2.3"/><circle cx="826.5" cy="1087.5" r="2.3"/><circle cx="828.9" cy="1085.2" r="2.3"/><circle cx="831.2" cy="1087.5" r="2.3"/><circle cx="833.5" cy="1083.0" r="2.3"/><circle cx="835.8" cy="1087.5" r="2.3"/><circle cx="838.1" cy="1085.2" r="2.3"/><circle cx="840.4" cy="1085.2" r="2.3"/><circle cx="842.7" cy="1083.0" r="2.3"/><circle cx="845.0" cy="1087.5" r="2.3"/><circle cx="847.3" cy="1085.2" r="2.3"/><circle cx="849.6" cy="1085.2" r="2.3"/><circle cx="851.9" cy="1085.2" r="2.3"/><circle cx="854.2" cy="1085.2" r="2.3"/><circle cx="856.5" cy="1085.2" r="2.3"/><circle cx="858.8" cy="1085.2" r="2.3"/><circle cx="861.2" cy="1083.0" r="2.3"/><circle cx="863.5" cy="1085.2" r="2.3"/><circle cx="865.8" cy="1083.0" r="2.3"/><circle cx="868.1" cy="1087.5" r="2.3"/><circle cx="870.4" cy="1083.0" r="2.3"/><circle cx="872.7" cy="1085.2" r="2.3"/><circle cx="875.0" cy="1083.0" r="2.3"/><circle cx="877.3" cy="1085.2" r="2.3"/><circle cx="879.6" cy="1085.2" r="2.3"/><circle cx="881.9" cy="1085.2" r="2.3"/><circle cx="884.2" cy="1087.5" r="2.3"/><circle cx="886.5" cy="1083.0" r="2.3"/><circle cx="888.8" cy="1085.2" r="2.3"/><circle cx="891.1" cy="1085.2" r="2.3"/><circle cx="893.4" cy="1085.2" r="2.3"/><circle cx="895.8" cy="1085.2" r="2.3"/><circle cx="898.1" cy="1085.2" r="2.3"/><circle cx="900.4" cy="1085.2" r="2.3"/><circle cx="902.7" cy="1085.2" r="2.3"/><circle cx="905.0" cy="1085.2" r="2.3"/><circle cx="907.3" cy="1085.2" r="2.3"/><circle cx="909.6" cy="1085.2" r="2.3"/><circle cx="911.9" cy="1083.0" r="2.3"/><circle cx="914.2" cy="1087.5" r="2.3"/><circle cx="916.5" cy="1083.0" r="2.3"/><circle cx="918.8" cy="1087.5" r="2.3"/><circle cx="921.1" cy="1085.2" r="2.3"/><circle cx="923.4" cy="1085.2" r="2.3"/><circle cx="925.7" cy="1085.2" r="2.3"/><circle cx="928.1" cy="1085.2" r="2.3"/><circle cx="930.4" cy="1085.2" r="2.3"/><circle cx="932.7" cy="1085.2" r="2.3"/><circle cx="935.0" cy="1085.2" r="2.3"/><circle cx="937.3" cy="1085.2" r="2.3"/><circle cx="939.6" cy="1085.2" r="2.3"/><circle cx="941.9" cy="1083.0" r="2.3"/><circle cx="944.2" cy="1085.2" r="2.3"/><circle cx="946.5" cy="1085.2" r="2.3"/><circle cx="948.8" cy="1085.2" r="2.3"/><circle cx="951.1" cy="1085.2" r="2.3"/><circle cx="953.4" cy="1085.2" r="2.3"/><circle cx="955.7" cy="1085.2" r="2.3"/><circle cx="958.0" cy="1085.2" r="2.3"/><circle cx="960.4" cy="1085.2" r="2.3"/><circle cx="962.7" cy="1083.0" r="2.3"/><circle cx="965.0" cy="1085.2" r="2.3"/><circle cx="967.3" cy="1083.0" r="2.3"/><circle cx="969.6" cy="1085.2" r="2.3"/><circle cx="971.9" cy="1087.5" r="2.3"/><circle cx="974.2" cy="1083.0" r="2.3"/><circle cx="976.5" cy="1087.5" r="2.3"/><circle cx="978.8" cy="1085.2" r="2.3"/><circle cx="981.1" cy="1085.2" r="2.3"/><circle cx="983.4" cy="1085.2" r="2.3"/><circle cx="985.7" cy="1085.2" r="2.3"/><circle cx="988.0" cy="1083.0" r="2.3"/><circle cx="990.3" cy="1087.5" r="2.3"/><circle cx="992.7" cy="1085.2" r="2.3"/><circle cx="995.0" cy="1085.2" r="2.3"/><circle cx="997.3" cy="1083.0" r="2.3"/><circle cx="999.6" cy="1085.2" r="2.3"/><circle cx="1001.9" cy="1085.2" r="2.3"/><circle cx="1004.2" cy="1085.2" r="2.3"/><circle cx="1006.5" cy="1085.2" r="2.3"/><circle cx="1008.8" cy="1087.5" r="2.3"/><circle cx="1011.1" cy="1083.0" r="2.3"/><circle cx="1013.4" cy="1085.2" r="2.3"/><circle cx="1015.7" cy="1085.2" r="2.3"/><circle cx="1018.0" cy="1085.2" r="2.3"/><circle cx="1020.3" cy="1087.5" r="2.3"/><circle cx="1022.6" cy="1083.0" r="2.3"/><circle cx="1024.9" cy="1087.5" r="2.3"/><circle cx="1027.3" cy="1083.0" r="2.3"/><circle cx="1029.6" cy="1087.5" r="2.3"/><circle cx="1031.9" cy="1085.2" r="2.3"/><circle cx="1034.2" cy="1083.0" r="2.3"/><circle cx="1036.5" cy="1085.2" r="2.3"/><circle cx="1038.8" cy="1083.0" r="2.3"/><circle cx="1041.1" cy="1087.5" r="2.3"/><circle cx="1043.4" cy="1083.0" r="2.3"/><circle cx="1045.7" cy="1087.5" r="2.3"/><circle cx="1048.0" cy="1083.0" r="2.3"/><circle cx="1050.3" cy="1087.5" r="2.3"/><circle cx="1052.6" cy="1085.2" r="2.3"/><circle cx="1054.9" cy="1085.2" r="2.3"/><circle cx="1057.2" cy="1085.2" r="2.3"/><circle cx="1059.6" cy="1083.0" r="2.3"/><circle cx="1061.9" cy="1087.5" r="2.3"/><circle cx="1064.2" cy="1083.0" r="2.3"/><circle cx="1066.5" cy="1087.5" r="2.3"/><circle cx="1068.8" cy="1085.2" r="2.3"/><circle cx="1071.1" cy="1085.2" r="2.3"/><circle cx="1073.4" cy="1085.2" r="2.3"/><circle cx="1075.7" cy="1087.5" r="2.3"/><circle cx="1078.0" cy="1083.0" r="2.3"/><circle cx="1080.3" cy="1087.5" r="2.3"/><circle cx="1082.6" cy="1085.2" r="2.3"/><circle cx="1084.9" cy="1087.5" r="2.3"/><circle cx="1087.2" cy="1083.0" r="2.3"/><circle cx="1089.5" cy="1087.5" r="2.3"/><circle cx="1091.9" cy="1085.2" r="2.3"/><circle cx="1094.2" cy="1085.2" r="2.3"/><circle cx="1096.5" cy="1083.0" r="2.3"/><circle cx="1098.8" cy="1087.5" r="2.3"/><circle cx="1101.1" cy="1083.0" r="2.3"/><circle cx="1103.4" cy="1087.5" r="2.3"/><circle cx="1105.7" cy="1083.0" r="2.3"/><circle cx="1108.0" cy="1085.2" r="2.3"/><circle cx="1110.3" cy="1085.2" r="2.3"/><circle cx="1112.6" cy="1085.2" r="2.3"/><circle cx="1114.9" cy="1085.2" r="2.3"/><circle cx="1117.2" cy="1085.2" r="2.3"/><circle cx="1119.5" cy="1085.2" r="2.3"/><circle cx="1121.8" cy="1085.2" r="2.3"/><circle cx="1124.1" cy="1083.0" r="2.3"/><circle cx="1126.5" cy="1085.2" r="2.3"/><circle cx="1128.8" cy="1083.0" r="2.3"/><circle cx="1131.1" cy="1087.5" r="2.3"/><circle cx="1133.4" cy="1083.0" r="2.3"/><circle cx="1135.7" cy="1087.5" r="2.3"/><circle cx="1138.0" cy="1085.2" r="2.3"/><circle cx="1140.3" cy="1085.2" r="2.3"/><circle cx="1142.6" cy="1085.2" r="2.3"/><circle cx="1144.9" cy="1083.0" r="2.3"/><circle cx="1147.2" cy="1085.2" r="2.3"/><circle cx="1149.5" cy="1083.0" r="2.3"/><circle cx="1151.8" cy="1087.5" r="2.3"/><circle cx="1154.1" cy="1083.0" r="2.3"/><circle cx="1156.4" cy="1087.5" r="2.3"/><circle cx="1158.8" cy="1083.0" r="2.3"/><circle cx="1161.1" cy="1085.2" r="2.3"/><circle cx="1163.4" cy="1083.0" r="2.3"/><circle cx="1165.7" cy="1087.5" r="2.3"/><circle cx="1168.0" cy="1083.0" r="2.3"/><circle cx="1170.3" cy="1087.5" r="2.3"/><circle cx="1172.6" cy="1085.2" r="2.3"/><circle cx="1174.9" cy="1085.2" r="2.3"/><circle cx="1177.2" cy="1087.5" r="2.3"/><circle cx="1179.5" cy="1083.0" r="2.3"/><circle cx="1181.8" cy="1085.2" r="2.3"/><circle cx="1184.1" cy="1083.0" r="2.3"/><circle cx="1186.4" cy="1085.2" r="2.3"/><circle cx="1188.7" cy="1083.0" r="2.3"/><circle cx="1191.1" cy="1087.5" r="2.3"/><circle cx="1193.4" cy="1083.0" r="2.3"/><circle cx="1195.7" cy="1087.5" r="2.3"/><circle cx="1198.0" cy="1083.0" r="2.3"/><circle cx="1200.3" cy="1087.5" r="2.3"/><circle cx="1202.6" cy="1083.0" r="2.3"/><circle cx="1204.9" cy="1087.5" r="2.3"/><circle cx="1207.2" cy="1083.0" r="2.3"/><circle cx="1209.5" cy="1085.2" r="2.3"/><circle cx="1211.8" cy="1085.2" r="2.3"/><circle cx="1214.1" cy="1085.2" r="2.3"/><circle cx="1216.4" cy="1087.5" r="2.3"/><circle cx="1218.7" cy="1083.0" r="2.3"/><circle cx="1221.0" cy="1085.2" r="2.3"/><circle cx="1223.4" cy="1087.5" r="2.3"/><circle cx="1225.7" cy="1083.0" r="2.3"/><circle cx="1228.0" cy="1087.5" r="2.3"/><circle cx="1230.3" cy="1083.0" r="2.3"/><circle cx="1232.6" cy="1087.5" r="2.3"/><circle cx="1234.9" cy="1085.2" r="2.3"/><circle cx="1237.2" cy="1085.2" r="2.3"/><circle cx="1239.5" cy="1085.2" r="2.3"/><circle cx="1241.8" cy="1085.2" r="2.3"/><circle cx="1244.1" cy="1087.5" r="2.3"/><circle cx="1246.4" cy="1083.0" r="2.3"/><circle cx="1248.7" cy="1087.5" r="2.3"/><circle cx="1251.0" cy="1083.0" r="2.3"/><circle cx="1253.3" cy="1085.2" r="2.3"/><circle cx="1255.6" cy="1085.2" r="2.3"/><circle cx="1258.0" cy="1087.5" r="2.3"/><circle cx="1260.3" cy="1083.0" r="2.3"/><circle cx="1262.6" cy="1085.2" r="2.3"/><circle cx="1264.9" cy="1085.2" r="2.3"/><circle cx="1267.2" cy="1085.2" r="2.3"/><circle cx="1269.5" cy="1087.5" r="2.3"/><circle cx="1271.8" cy="1083.0" r="2.3"/><circle cx="1274.1" cy="1085.2" r="2.3"/><circle cx="1276.4" cy="1083.0" r="2.3"/><circle cx="1278.7" cy="1087.5" r="2.3"/><circle cx="1281.0" cy="1083.0" r="2.3"/><circle cx="1283.3" cy="1087.5" r="2.3"/><circle cx="1285.6" cy="1085.2" r="2.3"/><circle cx="1287.9" cy="1085.2" r="2.3"/><circle cx="1290.3" cy="1085.2" r="2.3"/><circle cx="1292.6" cy="1085.2" r="2.3"/><circle cx="1294.9" cy="1085.2" r="2.3"/><circle cx="1297.2" cy="1085.2" r="2.3"/><circle cx="1299.5" cy="1083.0" r="2.3"/><circle cx="1301.8" cy="1085.2" r="2.3"/><circle cx="1304.1" cy="1083.0" r="2.3"/><circle cx="1306.4" cy="1087.5" r="2.3"/><circle cx="1308.7" cy="1085.2" r="2.3"/><circle cx="1311.0" cy="1085.2" r="2.3"/><circle cx="1313.3" cy="1085.2" r="2.3"/><circle cx="1315.6" cy="1085.2" r="2.3"/><circle cx="1317.9" cy="1085.2" r="2.3"/><circle cx="1320.2" cy="1083.0" r="2.3"/><circle cx="1322.6" cy="1087.5" r="2.3"/><circle cx="1324.9" cy="1083.0" r="2.3"/><circle cx="1327.2" cy="1085.2" r="2.3"/><circle cx="1329.5" cy="1083.0" r="2.3"/><circle cx="1331.8" cy="1085.2" r="2.3"/><circle cx="1334.1" cy="1085.2" r="2.3"/><circle cx="1336.4" cy="1085.2" r="2.3"/><circle cx="1338.7" cy="1085.2" r="2.3"/><circle cx="1341.0" cy="1085.2" r="2.3"/><circle cx="1343.3" cy="1085.2" r="2.3"/><circle cx="1345.6" cy="1083.0" r="2.3"/><circle cx="1347.9" cy="1087.5" r="2.3"/><circle cx="1350.2" cy="1083.0" r="2.3"/><circle cx="1352.5" cy="1085.2" r="2.3"/><circle cx="1354.8" cy="1085.2" r="2.3"/><circle cx="1357.2" cy="1085.2" r="2.3"/><circle cx="1359.5" cy="1085.2" r="2.3"/><circle cx="1361.8" cy="1085.2" r="2.3"/><circle cx="1364.1" cy="1087.5" r="2.3"/><circle cx="1366.4" cy="1085.2" r="2.3"/><circle cx="1368.7" cy="1087.5" r="2.3"/><circle cx="1371.0" cy="1083.0" r="2.3"/><circle cx="1373.3" cy="1087.5" r="2.3"/><circle cx="1375.6" cy="1083.0" r="2.3"/><circle cx="1377.9" cy="1087.5" r="2.3"/><circle cx="1380.2" cy="1085.2" r="2.3"/><circle cx="1382.5" cy="1085.2" r="2.3"/><circle cx="1384.8" cy="1085.2" r="2.3"/><circle cx="1387.1" cy="1087.5" r="2.3"/><circle cx="1389.5" cy="1083.0" r="2.3"/><circle cx="1391.8" cy="1087.5" r="2.3"/><circle cx="1394.1" cy="1083.0" r="2.3"/><circle cx="1396.4" cy="1085.2" r="2.3"/><circle cx="1398.7" cy="1085.2" r="2.3"/><circle cx="1401.0" cy="1083.0" r="2.3"/><circle cx="1403.3" cy="1087.5" r="2.3"/><circle cx="1405.6" cy="1083.0" r="2.3"/><circle cx="1407.9" cy="1085.2" r="2.3"/><circle cx="1410.2" cy="1083.0" r="2.3"/><circle cx="1412.5" cy="1087.5" r="2.3"/><circle cx="1414.8" cy="1085.2" r="2.3"/><circle cx="1417.1" cy="1085.2" r="2.3"/><circle cx="1419.4" cy="1083.0" r="2.3"/><circle cx="1421.8" cy="1085.2" r="2.3"/><circle cx="1424.1" cy="1085.2" r="2.3"/><circle cx="1426.4" cy="1085.2" r="2.3"/><circle cx="1428.7" cy="1087.5" r="2.3"/><circle cx="1431.0" cy="1083.0" r="2.3"/><circle cx="1433.3" cy="1087.5" r="2.3"/><circle cx="1435.6" cy="1083.0" r="2.3"/><circle cx="1437.9" cy="1087.5" r="2.3"/><circle cx="1440.2" cy="1083.0" r="2.3"/><circle cx="1442.5" cy="1087.5" r="2.3"/><circle cx="1444.8" cy="1085.2" r="2.3"/><circle cx="1447.1" cy="1087.5" r="2.3"/><circle cx="1449.4" cy="1085.2" r="2.3"/><circle cx="1451.7" cy="1085.2" r="2.3"/><circle cx="1454.1" cy="1085.2" r="2.3"/><circle cx="1456.4" cy="1085.2" r="2.3"/><circle cx="1458.7" cy="1083.0" r="2.3"/><circle cx="1461.0" cy="1087.5" r="2.3"/><circle cx="1463.3" cy="1085.2" r="2.3"/><circle cx="1465.6" cy="1085.2" r="2.3"/><circle cx="1467.9" cy="1087.5" r="2.3"/><circle cx="1470.2" cy="1083.0" r="2.3"/><circle cx="1472.5" cy="1087.5" r="2.3"/><circle cx="1474.8" cy="1083.0" r="2.3"/><circle cx="1477.1" cy="1085.2" r="2.3"/><circle cx="1479.4" cy="1083.0" r="2.3"/><circle cx="1481.7" cy="1087.5" r="2.3"/><circle cx="1484.0" cy="1083.0" r="2.3"/><circle cx="1486.3" cy="1087.5" r="2.3"/><circle cx="1488.7" cy="1083.0" r="2.3"/><circle cx="1491.0" cy="1085.2" r="2.3"/><circle cx="1493.3" cy="1083.0" r="2.3"/><circle cx="1495.6" cy="1087.5" r="2.3"/><circle cx="1497.9" cy="1083.0" r="2.3"/><circle cx="1500.2" cy="1085.2" r="2.3"/><circle cx="1502.5" cy="1085.2" r="2.3"/><circle cx="1504.8" cy="1083.0" r="2.3"/><circle cx="1507.1" cy="1085.2" r="2.3"/><circle cx="1509.4" cy="1087.5" r="2.3"/><circle cx="1511.7" cy="1083.0" r="2.3"/><circle cx="1514.0" cy="1087.5" r="2.3"/><circle cx="1516.3" cy="1085.2" r="2.3"/><circle cx="1518.6" cy="1087.5" r="2.3"/><circle cx="1521.0" cy="1083.0" r="2.3"/><circle cx="1523.3" cy="1087.5" r="2.3"/><circle cx="1525.6" cy="1083.0" r="2.3"/><circle cx="1527.9" cy="1087.5" r="2.3"/><circle cx="1530.2" cy="1085.2" r="2.3"/><circle cx="1532.5" cy="1085.2" r="2.3"/><circle cx="1534.8" cy="1085.2" r="2.3"/><circle cx="1537.1" cy="1087.5" r="2.3"/><circle cx="1539.4" cy="1083.0" r="2.3"/><circle cx="1541.7" cy="1087.5" r="2.3"/><circle cx="1544.0" cy="1085.2" r="2.3"/><circle cx="1546.3" cy="1087.5" r="2.3"/><circle cx="1548.6" cy="1085.2" r="2.3"/><circle cx="1550.9" cy="1087.5" r="2.3"/><circle cx="1553.3" cy="1083.0" r="2.3"/><circle cx="1555.6" cy="1087.5" r="2.3"/><circle cx="1557.9" cy="1085.2" r="2.3"/><circle cx="1560.2" cy="1087.5" r="2.3"/><circle cx="1562.5" cy="1083.0" r="2.3"/><circle cx="1564.8" cy="1087.5" r="2.3"/><circle cx="1567.1" cy="1083.0" r="2.3"/><circle cx="1569.4" cy="1085.2" r="2.3"/><circle cx="1571.7" cy="1085.2" r="2.3"/><circle cx="1574.0" cy="1085.2" r="2.3"/><circle cx="1576.3" cy="1083.0" r="2.3"/><circle cx="1578.6" cy="1087.5" r="2.3"/><circle cx="1580.9" cy="1083.0" r="2.3"/><circle cx="1583.2" cy="1087.5" r="2.3"/><circle cx="1585.5" cy="1083.0" r="2.3"/><circle cx="1587.9" cy="1085.2" r="2.3"/><circle cx="1590.2" cy="1085.2" r="2.3"/><circle cx="1592.5" cy="1085.2" r="2.3"/><circle cx="1594.8" cy="1085.2" r="2.3"/><circle cx="1597.1" cy="1087.5" r="2.3"/><circle cx="1599.4" cy="1083.0" r="2.3"/><circle cx="1601.7" cy="1087.5" r="2.3"/><circle cx="1604.0" cy="1085.2" r="2.3"/><circle cx="1606.3" cy="1087.5" r="2.3"/><circle cx="1608.6" cy="1083.0" r="2.3"/><circle cx="1610.9" cy="1087.5" r="2.3"/><circle cx="1613.2" cy="1085.2" r="2.3"/><circle cx="1615.5" cy="1085.2" r="2.3"/><circle cx="1617.8" cy="1085.2" r="2.3"/><circle cx="1620.2" cy="1085.2" r="2.3"/><circle cx="1622.5" cy="1085.2" r="2.3"/><circle cx="1624.8" cy="1087.5" r="2.3"/><circle cx="1627.1" cy="1083.0" r="2.3"/><circle cx="1629.4" cy="1087.5" r="2.3"/><circle cx="1631.7" cy="1083.0" r="2.3"/><circle cx="1634.0" cy="1087.5" r="2.3"/><circle cx="1636.3" cy="1085.2" r="2.3"/><circle cx="1638.6" cy="1085.2" r="2.3"/><circle cx="1640.9" cy="1083.0" r="2.3"/><circle cx="1643.2" cy="1087.5" r="2.3"/><circle cx="1645.5" cy="1083.0" r="2.3"/><circle cx="1647.8" cy="1085.2" r="2.3"/><circle cx="1650.1" cy="1085.2" r="2.3"/><circle cx="1652.5" cy="1085.2" r="2.3"/><circle cx="1654.8" cy="1095.3" r="2.3"/><circle cx="1657.1" cy="1083.0" r="2.3"/><circle cx="1659.4" cy="1087.5" r="2.3"/><circle cx="1661.7" cy="1083.0" r="2.3"/><circle cx="1664.0" cy="1085.2" r="2.3"/><circle cx="1666.3" cy="1083.0" r="2.3"/><circle cx="1668.6" cy="1085.2" r="2.3"/><circle cx="1670.9" cy="1083.0" r="2.3"/><circle cx="1673.2" cy="1085.2" r="2.3"/><circle cx="1675.5" cy="1085.2" r="2.3"/><circle cx="1677.8" cy="1085.2" r="2.3"/><circle cx="1680.1" cy="1085.2" r="2.3"/><circle cx="1682.4" cy="1085.2" r="2.3"/><circle cx="1684.8" cy="1085.2" r="2.3"/><circle cx="1687.1" cy="1085.2" r="2.3"/><circle cx="1689.4" cy="1083.0" r="2.3"/><circle cx="1691.7" cy="1087.5" r="2.3"/><circle cx="1694.0" cy="1085.2" r="2.3"/><circle cx="1696.3" cy="1085.2" r="2.3"/><circle cx="1698.6" cy="1085.2" r="2.3"/><circle cx="1700.9" cy="1087.5" r="2.3"/><circle cx="1703.2" cy="1085.2" r="2.3"/><circle cx="1705.5" cy="1087.5" r="2.3"/><circle cx="1707.8" cy="1083.0" r="2.3"/><circle cx="1710.1" cy="1087.5" r="2.3"/><circle cx="1712.4" cy="1085.2" r="2.3"/><circle cx="1714.7" cy="1085.2" r="2.3"/><circle cx="1717.0" cy="1085.2" r="2.3"/><circle cx="1719.4" cy="1085.2" r="2.3"/><circle cx="1721.7" cy="1085.2" r="2.3"/><circle cx="1724.0" cy="1087.5" r="2.3"/><circle cx="1726.3" cy="1085.2" r="2.3"/><circle cx="1728.6" cy="1085.2" r="2.3"/><circle cx="1730.9" cy="1083.0" r="2.3"/><circle cx="1733.2" cy="1085.2" r="2.3"/><circle cx="1735.5" cy="1083.0" r="2.3"/><circle cx="1737.8" cy="1087.5" r="2.3"/><circle cx="1740.1" cy="1083.0" r="2.3"/><circle cx="1742.4" cy="1087.5" r="2.3"/><circle cx="1744.7" cy="1083.0" r="2.3"/><circle cx="1747.0" cy="1085.2" r="2.3"/><circle cx="1749.3" cy="1085.2" r="2.3"/><circle cx="1751.7" cy="1085.2" r="2.3"/><circle cx="1754.0" cy="1085.2" r="2.3"/><circle cx="1756.3" cy="1085.2" r="2.3"/><circle cx="1758.6" cy="1085.2" r="2.3"/><circle cx="1760.9" cy="1085.2" r="2.3"/><circle cx="1763.2" cy="1085.2" r="2.3"/><circle cx="1765.5" cy="1085.2" r="2.3"/><circle cx="1767.8" cy="1083.0" r="2.3"/><circle cx="1770.1" cy="1087.5" r="2.3"/><circle cx="1772.4" cy="1083.0" r="2.3"/><circle cx="1774.7" cy="1085.2" r="2.3"/><circle cx="1777.0" cy="1085.2" r="2.3"/><circle cx="1779.3" cy="1087.5" r="2.3"/><circle cx="1781.6" cy="1083.0" r="2.3"/><circle cx="1784.0" cy="1085.2" r="2.3"/><circle cx="1786.3" cy="1085.2" r="2.3"/><circle cx="1788.6" cy="1083.0" r="2.3"/><circle cx="1790.9" cy="1087.5" r="2.3"/><circle cx="1793.2" cy="1085.2" r="2.3"/><circle cx="1795.5" cy="1085.2" r="2.3"/><circle cx="1797.8" cy="1087.5" r="2.3"/><circle cx="1800.1" cy="1083.0" r="2.3"/><circle cx="1802.4" cy="1087.5" r="2.3"/><circle cx="1804.7" cy="1085.2" r="2.3"/><circle cx="1807.0" cy="1087.5" r="2.3"/><circle cx="1809.3" cy="1085.2" r="2.3"/><circle cx="1811.6" cy="1085.2" r="2.3"/><circle cx="1813.9" cy="1085.2" r="2.3"/><circle cx="1816.2" cy="1083.0" r="2.3"/><circle cx="1818.6" cy="1087.5" r="2.3"/><circle cx="1820.9" cy="1085.2" r="2.3"/><circle cx="1823.2" cy="1087.5" r="2.3"/><circle cx="1825.5" cy="1085.2" r="2.3"/><circle cx="1827.8" cy="1085.2" r="2.3"/><circle cx="1830.1" cy="1085.2" r="2.3"/><circle cx="1832.4" cy="1085.2" r="2.3"/><circle cx="1834.7" cy="1085.2" r="2.3"/><circle cx="1837.0" cy="1087.5" r="2.3"/><circle cx="1839.3" cy="1083.0" r="2.3"/><circle cx="1841.6" cy="1087.5" r="2.3"/><circle cx="1843.9" cy="1083.0" r="2.3"/><circle cx="1846.2" cy="1085.2" r="2.3"/><circle cx="1848.5" cy="1087.5" r="2.3"/><circle cx="1850.9" cy="1085.2" r="2.3"/><circle cx="1853.2" cy="1087.5" r="2.3"/><circle cx="1855.5" cy="1083.0" r="2.3"/><circle cx="1857.8" cy="1085.2" r="2.3"/><circle cx="1860.1" cy="1085.2" r="2.3"/><circle cx="1862.4" cy="1083.0" r="2.3"/><circle cx="1864.7" cy="1085.2" r="2.3"/><circle cx="1867.0" cy="1085.2" r="2.3"/><circle cx="1869.3" cy="1085.2" r="2.3"/><circle cx="1871.6" cy="1085.2" r="2.3"/><circle cx="1873.9" cy="1085.2" r="2.3"/><circle cx="1876.2" cy="1085.2" r="2.3"/><circle cx="1878.5" cy="1085.2" r="2.3"/><circle cx="1880.8" cy="1085.2" r="2.3"/><circle cx="1883.2" cy="1085.2" r="2.3"/><circle cx="1885.5" cy="1085.2" r="2.3"/><circle cx="1887.8" cy="1087.5" r="2.3"/><circle cx="1890.1" cy="1083.0" r="2.3"/><circle cx="1892.4" cy="1089.7" r="2.3"/><circle cx="1894.7" cy="1083.0" r="2.3"/><circle cx="1897.0" cy="1087.5" r="2.3"/><circle cx="1899.3" cy="1083.0" r="2.3"/><circle cx="1901.6" cy="1085.2" r="2.3"/><circle cx="1903.9" cy="1095.3" r="2.3"/><circle cx="1906.2" cy="1087.5" r="2.3"/><circle cx="1908.5" cy="1085.2" r="2.3"/><circle cx="1910" cy="1220" r="2.4"/></g>
<polyline points="1913,1155 1911.5,1360" fill="none" stroke="#3D44EA" stroke-width="1.4"/>
<circle cx="1912" cy="1256" r="6" fill="rgba(240,80,80,0.22)"/>
<polyline points="1909.5,1360 1912,1256 1914,1360" fill="none" stroke="#F26B1D" stroke-width="1.3"/>
<circle cx="1912" cy="1256" r="2.5" fill="#E8332A"/>
<polyline points="1912,1360 1914,1300" fill="none" stroke="#3DB05A" stroke-width="1.2"/>
</svg>
<div class="a" style="left:86px;top:1395px;width:1830px;height:17px;background:linear-gradient(180deg,#5CC3F8 0%,#2AADF5 30%,#29ABF3 100%)"></div>
<div class="a" style="left:86px;top:1392px;width:27px;height:24px;border:1px solid #B9B9BE;border-radius:2px;background:linear-gradient(180deg,#F4F4F6,#DCDCE0)"><div class="a" style="left:7px;top:7px;width:2px;height:9px;background:#8D8FA3"></div><div class="a" style="left:11.5px;top:7px;width:2px;height:9px;background:#8D8FA3"></div><div class="a" style="left:16px;top:7px;width:2px;height:9px;background:#8D8FA3"></div></div>
<svg class="a" style="left:559px;top:1426px" width="20" height="14"><rect x="0" y="5" width="20" height="4" fill="#C83DBA"/><circle cx="10" cy="7" r="3.5" fill="#fff" stroke="#C83DBA" stroke-width="2"/></svg>
<div class="a" style="left:591.5px;top:1424px;font-size:15.5px;line-height:19px;color:#333">FPS</div>
<svg class="a" style="left:645px;top:1426px" width="20" height="14"><rect x="0" y="5" width="20" height="4" fill="#3DB05A"/></svg>
<div class="a" style="left:677.5px;top:1424px;font-size:15.5px;line-height:19px;color:#333">Smooth</div>
<svg class="a" style="left:756px;top:1426px" width="20" height="14"><rect x="0" y="5" width="20" height="4" fill="#1FA8A0"/></svg>
<div class="a" style="left:788.5px;top:1424px;font-size:15.5px;line-height:19px;color:#333">1%Low(FPS)</div>
<svg class="a" style="left:901.5px;top:1426px" width="20" height="14"><rect x="0" y="5" width="20" height="4" fill="#3D44EA"/></svg>
<div class="a" style="left:934.0px;top:1424px;font-size:15.5px;line-height:19px;color:#333">SmallJank</div>
<svg class="a" style="left:1029px;top:1426px" width="20" height="14"><rect x="0" y="5" width="20" height="4" fill="#F26B1D"/><circle cx="10" cy="7" r="3.5" fill="#fff" stroke="#F26B1D" stroke-width="2"/></svg>
<div class="a" style="left:1061.5px;top:1424px;font-size:15.5px;line-height:19px;color:#333">Jank</div>
<svg class="a" style="left:1120px;top:1426px" width="20" height="14"><rect x="0" y="5" width="20" height="4" fill="#E8332A"/><circle cx="10" cy="7" r="3.5" fill="#fff" stroke="#E8332A" stroke-width="2"/></svg>
<div class="a" style="left:1152.5px;top:1424px;font-size:15.5px;line-height:19px;color:#333">BigJank</div>
<svg class="a" style="left:1232.5px;top:1426px" width="20" height="14"><rect x="0" y="4.5" width="20" height="5" fill="#5B8FF0"/><rect x="0" y="6.5" width="20" height="1" fill="#9DBBF7"/></svg>
<div class="a" style="left:1265.0px;top:1424px;font-size:15.5px;line-height:19px;color:#333">Stutter</div>
<svg class="a" style="left:1337.5px;top:1426px" width="20" height="14"><rect x="0" y="5" width="20" height="4" fill="#26C6DA"/></svg>
<div class="a" style="left:1370.0px;top:1424px;font-size:15.5px;line-height:19px;color:#333">InterFrame</div>
<!-- /chart -->

<!-- watermarks -->
<div class="wm" style="left:398px;top:263px;width:100px;height:30px;line-height:30px;text-align:center">PerfDog</div>
<div class="wm" style="left:899px;top:263px;width:100px;height:30px;line-height:30px;text-align:center">PerfDog</div>
<div class="wm" style="left:1400px;top:263px;width:100px;height:30px;line-height:30px;text-align:center">PerfDog</div>
<div class="wm" style="left:1901px;top:263px;width:100px;height:30px;line-height:30px;text-align:center">PerfDog</div>
<div class="wm" style="left:398px;top:704px;width:100px;height:30px;line-height:30px;text-align:center">PerfDog</div>
<div class="wm" style="left:899px;top:704px;width:100px;height:30px;line-height:30px;text-align:center">PerfDog</div>
<div class="wm" style="left:1400px;top:704px;width:100px;height:30px;line-height:30px;text-align:center">PerfDog</div>
<div class="wm" style="left:1901px;top:704px;width:100px;height:30px;line-height:30px;text-align:center">PerfDog</div>
<div class="wm" style="left:398px;top:1142px;width:100px;height:30px;line-height:30px;text-align:center">PerfDog</div>
<div class="wm" style="left:899px;top:1142px;width:100px;height:30px;line-height:30px;text-align:center">PerfDog</div>
<div class="wm" style="left:1400px;top:1142px;width:100px;height:30px;line-height:30px;text-align:center">PerfDog</div>
<div class="wm" style="left:1901px;top:1142px;width:100px;height:30px;line-height:30px;text-align:center">PerfDog</div>

<!-- logo overlay -->
<div class="a" style="left:1739px;top:1349px;width:261px;height:101px;background:#fff"></div>
<svg class="a" style="left:1748px;top:1373px" width="64" height="64" viewBox="0 0 64 64">
 <circle cx="30" cy="30.5" r="27" fill="#13298C"/>
 <path d="M11 51 L14 24 L33 10 L43 40 Z" fill="#fff"/>
 <g stroke="#13298C" stroke-width="1.6"><line x1="12" y1="28" x2="35" y2="15"/><line x1="12" y1="33" x2="36.5" y2="20"/><line x1="11.5" y1="38" x2="38" y2="25"/><line x1="11" y1="43" x2="39.5" y2="30"/><line x1="10.5" y1="48" x2="41" y2="35"/></g>
 <path d="M33 10 L43 40 L41 42 L32 12 Z" fill="#33C7E8"/>
 <path d="M4 58 C14 48 22 44 28 45 C24 50 32 52 44 44 C52 38 58 33 62 30 C54 40 44 52 32 55 C24 57 18 54 22 50 C16 52 10 55 4 58 Z" fill="#D8231A"/>
</svg>
<div class="a" style="left:1819px;top:1373px;font-family:'Liberation Serif',serif;font-size:38px;font-weight:700;line-height:46px;color:#1E1E1E;-webkit-text-stroke:0.8px #1E1E1E">芯域矩阵</div>
<div class="a" style="left:1817px;top:1420px;font-size:13.5px;line-height:16px;letter-spacing:4.85px;color:#333">zzslyyxcfy.com</div>
</body></html>
